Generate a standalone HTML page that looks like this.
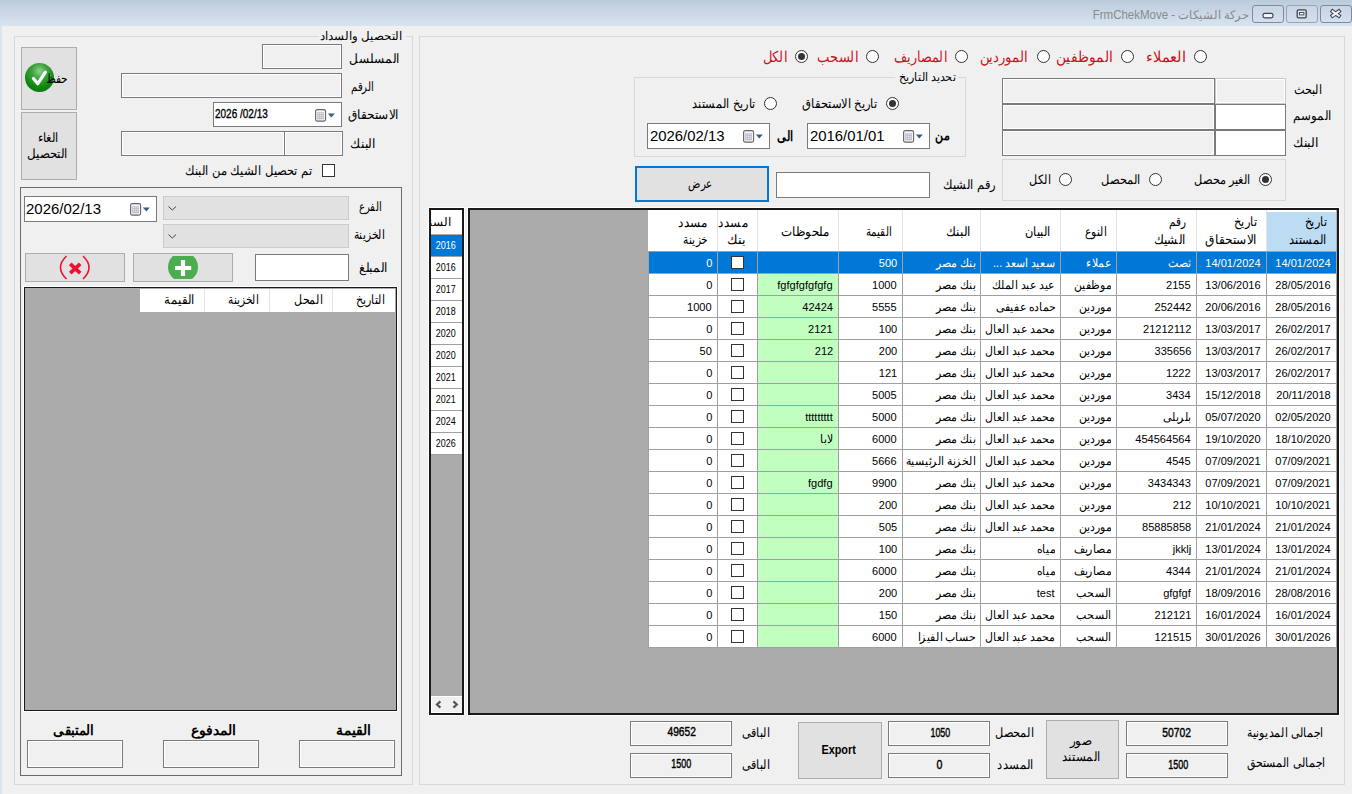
<!DOCTYPE html><html><head><meta charset="utf-8"><style>
*{margin:0;padding:0;box-sizing:border-box}
html,body{width:1352px;height:794px;overflow:hidden;background:#f0f0f0;font-family:"Liberation Sans",sans-serif;color:#000}
div{position:absolute}
.tb{background:#f0f0f0;border:1px solid #7a7a7a;box-shadow:inset 0 0 0 1px #fff}
.tbw{background:#fff;border:1px solid #7a7a7a}
.tbd{background:#f0f0f0;border:1px solid #c8c8c8;box-shadow:inset 0 0 0 1px #fff}
.dp{background:#fff;border:1px solid #7a7a7a;overflow:hidden}
.btn{background:#e1e1e1;border:1px solid #adadad}
.grp{border:1px solid #d8d8d8}
.radio{width:13px;height:13px;border:1px solid #333;border-radius:50%;background:#fff}
.rdot{left:2px;top:2px;width:7px;height:7px;border-radius:50%;background:#333}
.chk{width:13px;height:13px;border:1px solid #333;background:#fff}
.grid{border:2px solid #1a1a1a;background:#ababab;box-shadow:0 0 0 1px #fff}
.cell{border-bottom:1px solid #a0a0a0;background:#fff;overflow:hidden}
</style></head><body>

<div style="left:0;top:0;width:1352px;height:26px;background:linear-gradient(#bccbdc,#d7e4f1)"></div>
<div style="left:849px;width:400px;text-align:right;top:4.5px;height:20px;line-height:20px;white-space:nowrap;font-size:12px;color:#8a8a8a;"><span style="display:inline-block;transform:scaleX(0.9589);transform-origin:right center;direction:rtl;unicode-bidi:plaintext;">FrmChekMove - حركة الشيكات</span></div>
<div style="left:1252px;top:5px;width:32px;height:18px;border:1px solid #7d8aa6;border-radius:3px;background:linear-gradient(#c9d5e3,#d3dfec)"><svg width="32" height="18" style="position:absolute;left:-1px;top:-1px"><rect x="11" y="8.3" width="10" height="4.6" rx="1.8" fill="#f4f4f4" stroke="#3a4256" stroke-width="1.2"/></svg></div>
<div style="left:1286px;top:5px;width:32px;height:18px;border:1px solid #9aa3b3;border-radius:3px;background:linear-gradient(#c9d5e3,#d3dfec)"><svg width="32" height="18" style="position:absolute;left:-1px;top:-1px"><rect x="11.2" y="4.8" width="9" height="8" rx="1.3" fill="#e6e6e6" stroke="#3a4256" stroke-width="1.3"/><rect x="13.5" y="7.5" width="4.4" height="2.4" fill="#fafafa" stroke="#3a4256" stroke-width="0.9"/></svg></div>
<div style="left:1320px;top:5px;width:32px;height:18px;border:1px solid #7d8aa6;border-radius:3px;background:linear-gradient(#c9d5e3,#d3dfec)"><svg width="32" height="18" style="position:absolute;left:-1px;top:-1px"><path d="M12.6 6.4l6.2 4.4M18.8 6.4l-6.2 4.4" stroke="#3a4256" stroke-width="4" stroke-linecap="square"/><path d="M12.6 6.4l6.2 4.4M18.8 6.4l-6.2 4.4" stroke="#f4f4f4" stroke-width="2" stroke-linecap="square"/></svg></div>
<div style="left:0;top:26px;width:2px;height:768px;background:#d9e5f2"></div>
<div class="grp" style="left:14px;top:36px;width:399px;height:749px"></div>
<div style="left:319px;top:30px;width:87px;height:12px;background:#f0f0f0"></div>
<div style="left:2px;width:400px;text-align:right;top:26.0px;height:20px;line-height:20px;white-space:nowrap;font-size:12px;"><span style="display:inline-block;transform:scaleX(0.9839);transform-origin:right center;direction:rtl;unicode-bidi:plaintext;">التحصيل والسداد</span></div>
<div class="btn" style="left:21px;top:47px;width:56px;height:63px;"></div>
<div style="left:25px;top:63px;width:29px;height:29px;border-radius:50%;background:radial-gradient(circle at 50% 28%,#8fd08f 0%,#3ea23e 30%,#108a10 62%,#0a6a0a 100%)"></div>
<svg width="30" height="30" style="position:absolute;left:25px;top:63px"><path d="M8.5 15.5l4.3 5.2l7.6-11.6" stroke="#fff" stroke-width="3.2" fill="none" stroke-linecap="round" stroke-linejoin="round"/></svg>
<div style="left:-332px;width:400px;text-align:right;top:68.5px;height:20px;line-height:20px;white-space:nowrap;font-size:13px;"><span style="display:inline-block;transform:scaleX(0.8148);transform-origin:right center;direction:rtl;unicode-bidi:plaintext;">حفظ</span></div>
<div class="btn" style="left:21px;top:112px;width:56px;height:68px;"></div>
<div style="left:-152.5px;width:400px;text-align:center;top:127.5px;height:20px;line-height:20px;white-space:nowrap;font-size:13px;"><span style="display:inline-block;transform:scaleX(0.8750);transform-origin:center center;direction:rtl;unicode-bidi:plaintext;">الغاء</span></div>
<div style="left:-152.5px;width:400px;text-align:center;top:144.0px;height:20px;line-height:20px;white-space:nowrap;font-size:13px;"><span style="display:inline-block;transform:scaleX(0.9111);transform-origin:center center;direction:rtl;unicode-bidi:plaintext;">التحصيل</span></div>
<div style="left:0px;width:400px;text-align:right;top:48.8px;height:20px;line-height:20px;white-space:nowrap;font-size:13px;"><span style="display:inline-block;transform:scaleX(0.9352);transform-origin:right center;direction:rtl;unicode-bidi:plaintext;">المسلسل</span></div>
<div style="left:-26.30000000000001px;width:400px;text-align:right;top:77.2px;height:20px;line-height:20px;white-space:nowrap;font-size:13px;"><span style="display:inline-block;transform:scaleX(0.7767);transform-origin:right center;direction:rtl;unicode-bidi:plaintext;">الرقم</span></div>
<div style="left:-1.3999999999999773px;width:400px;text-align:right;top:104.7px;height:20px;line-height:20px;white-space:nowrap;font-size:13px;"><span style="display:inline-block;transform:scaleX(0.9327);transform-origin:right center;direction:rtl;unicode-bidi:plaintext;">الاستحقاق</span></div>
<div style="left:-24px;width:400px;text-align:right;top:134.3px;height:20px;line-height:20px;white-space:nowrap;font-size:13px;"><span style="display:inline-block;transform:scaleX(0.9481);transform-origin:right center;direction:rtl;unicode-bidi:plaintext;">البنك</span></div>
<div style="left:-87.80000000000001px;width:400px;text-align:right;top:160.7px;height:20px;line-height:20px;white-space:nowrap;font-size:13px;"><span style="display:inline-block;transform:scaleX(0.8902);transform-origin:right center;direction:rtl;unicode-bidi:plaintext;">تم تحصيل الشيك من البنك</span></div>
<div class="tb" style="left:262px;top:44px;width:80px;height:25px;"></div>
<div class="tb" style="left:121px;top:73px;width:221px;height:25px;"></div>
<div class="dp" style="left:213px;top:102px;width:129px;height:25px;"><svg width="22" height="13" viewBox="0 0 22 13" style="position:absolute;right:4px;top:50%;margin-top:-6px"><rect x="0.6" y="0.6" width="10" height="11.5" rx="1.6" fill="#f2f5fa" stroke="#6e6262" stroke-width="1.1"/><rect x="2.2" y="3.2" width="6.8" height="7" fill="#b9bdc8"/><path d="M3.3 4.3h1M5.3 4.3h1M7.3 4.3h1M3.3 6.3h1M5.3 6.3h1M7.3 6.3h1M3.3 8.3h1M5.3 8.3h1M7.3 8.3h1" stroke="#fff" stroke-width="1"/><path d="M12.8 4.6h7l-3.5 3.8z" fill="#3d5a85"/></svg></div>
<div class="tb" style="left:121px;top:131px;width:164px;height:25px;"></div>
<div class="tb" style="left:284px;top:131px;width:59px;height:25px;"></div>
<div class="chk" style="left:322px;top:164px"></div>
<div style="left:215.4px;width:400px;text-align:left;top:104.0px;height:20px;line-height:20px;white-space:nowrap;font-size:12px;-webkit-text-stroke:0.35px #000;"><span style="display:inline-block;transform:scaleX(0.8327);transform-origin:left center;">2026 /02/13</span></div>
<div style="left:20px;top:187px;width:382px;height:589px;border:1px solid #6a6a6a"></div>
<div class="dp" style="left:24px;top:196px;width:133px;height:26px;"><svg width="22" height="13" viewBox="0 0 22 13" style="position:absolute;right:4px;top:50%;margin-top:-6px"><rect x="0.6" y="0.6" width="10" height="11.5" rx="1.6" fill="#f2f5fa" stroke="#6e6262" stroke-width="1.1"/><rect x="2.2" y="3.2" width="6.8" height="7" fill="#b9bdc8"/><path d="M3.3 4.3h1M5.3 4.3h1M7.3 4.3h1M3.3 6.3h1M5.3 6.3h1M7.3 6.3h1M3.3 8.3h1M5.3 8.3h1M7.3 8.3h1" stroke="#fff" stroke-width="1"/><path d="M12.8 4.6h7l-3.5 3.8z" fill="#3d5a85"/></svg></div>
<div class="" style="left:163px;top:196px;width:186px;height:24px;background:#e1e1e1;border:1px solid #cccccc"><svg width="12" height="8" style="position:absolute;left:3px;top:8px"><path d="M1.5 1.5l3.8 3.5l3.8-3.5" stroke="#444" stroke-width="1" fill="none"/></svg></div>
<div class="" style="left:163px;top:224px;width:186px;height:24px;background:#e1e1e1;border:1px solid #cccccc"><svg width="12" height="8" style="position:absolute;left:3px;top:8px"><path d="M1.5 1.5l3.8 3.5l3.8-3.5" stroke="#444" stroke-width="1" fill="none"/></svg></div>
<div class="btn" style="left:25px;top:253px;width:100px;height:29px;"><svg width="100" height="29" style="position:absolute;left:-1px;top:-1px"><path d="M41.5 3 Q29.5 14.5 41.5 26" stroke="#ee1133" stroke-width="1.6" fill="none"/><path d="M58 3 Q70 14.5 58 26" stroke="#ee1133" stroke-width="1.6" fill="none"/><path d="M45.2 10.8l10 9.4M55.2 10.8l-10 9.4" stroke="#ee1133" stroke-width="3.8"/></svg></div>
<div class="btn" style="left:133px;top:253px;width:100px;height:29px;"><div style="left:0;top:2px;width:98px;height:23px;overflow:hidden"><div style="left:34px;top:-4px;width:30px;height:30px;border-radius:50%;background:#4aae50"></div><svg width="98" height="23" style="position:absolute;left:0;top:0"><path d="M49 4v16M41 12h16.2" stroke="#fff" stroke-width="4.2"/></svg></div></div>
<div class="tbw" style="left:255px;top:254px;width:94px;height:27px;"></div>
<div style="left:26px;width:400px;text-align:left;top:199.0px;height:20px;line-height:20px;white-space:nowrap;font-size:15px;"><span style="display:inline-block;transform:scaleX(0.9990);transform-origin:left center;">2026/02/13</span></div>
<div style="left:-18.5px;width:400px;text-align:right;top:197.3px;height:20px;line-height:20px;white-space:nowrap;font-size:13px;"><span style="display:inline-block;transform:scaleX(0.7767);transform-origin:right center;direction:rtl;unicode-bidi:plaintext;">الفرع</span></div>
<div style="left:-15.399999999999977px;width:400px;text-align:right;top:225.3px;height:20px;line-height:20px;white-space:nowrap;font-size:13px;"><span style="display:inline-block;transform:scaleX(0.8263);transform-origin:right center;direction:rtl;unicode-bidi:plaintext;">الخزينة</span></div>
<div style="left:-12.300000000000011px;width:400px;text-align:right;top:257.6px;height:20px;line-height:20px;white-space:nowrap;font-size:13px;"><span style="display:inline-block;transform:scaleX(0.9323);transform-origin:right center;direction:rtl;unicode-bidi:plaintext;">المبلغ</span></div>
<div class="grid" style="left:24px;top:287px;width:373px;height:424px;border-width:1px"></div>
<div style="left:140px;top:289px;width:255px;height:23px;background:#fff"></div>
<div style="left:204px;top:289px;width:1px;height:23px;background:#e3e3e3"></div>
<div style="left:269px;top:289px;width:1px;height:23px;background:#e3e3e3"></div>
<div style="left:332px;top:289px;width:1px;height:23px;background:#e3e3e3"></div>
<div style="left:-14.800000000000011px;width:400px;text-align:right;top:289.6px;height:20px;line-height:20px;white-space:nowrap;font-size:13px;"><span style="display:inline-block;transform:scaleX(0.8500);transform-origin:right center;direction:rtl;unicode-bidi:plaintext;">التاريخ</span></div>
<div style="left:-77.5px;width:400px;text-align:right;top:289.6px;height:20px;line-height:20px;white-space:nowrap;font-size:13px;"><span style="display:inline-block;transform:scaleX(0.8500);transform-origin:right center;direction:rtl;unicode-bidi:plaintext;">المحل</span></div>
<div style="left:-140.60000000000002px;width:400px;text-align:right;top:289.6px;height:20px;line-height:20px;white-space:nowrap;font-size:13px;"><span style="display:inline-block;transform:scaleX(0.8184);transform-origin:right center;direction:rtl;unicode-bidi:plaintext;">الخزينة</span></div>
<div style="left:-205.5px;width:400px;text-align:right;top:289.6px;height:20px;line-height:20px;white-space:nowrap;font-size:13px;"><span style="display:inline-block;transform:scaleX(0.8971);transform-origin:right center;direction:rtl;unicode-bidi:plaintext;">القيمة</span></div>
<div style="left:-28.80000000000001px;width:400px;text-align:right;top:719.5px;height:20px;line-height:20px;white-space:nowrap;font-size:14px;font-weight:bold;"><span style="display:inline-block;transform:scaleX(0.9943);transform-origin:right center;direction:rtl;unicode-bidi:plaintext;">القيمة</span></div>
<div style="left:-163.9px;width:400px;text-align:right;top:719.5px;height:20px;line-height:20px;white-space:nowrap;font-size:14px;font-weight:bold;"><span style="display:inline-block;transform:scaleX(1.0022);transform-origin:right center;direction:rtl;unicode-bidi:plaintext;">المدفوع</span></div>
<div style="left:-305.9px;width:400px;text-align:right;top:719.5px;height:20px;line-height:20px;white-space:nowrap;font-size:14px;font-weight:bold;"><span style="display:inline-block;transform:scaleX(0.9465);transform-origin:right center;direction:rtl;unicode-bidi:plaintext;">المتبقى</span></div>
<div class="tb" style="left:27px;top:740px;width:96px;height:28px;"></div>
<div class="tb" style="left:163px;top:740px;width:96px;height:28px;"></div>
<div class="tb" style="left:299px;top:740px;width:96px;height:28px;"></div>
<div class="grp" style="left:419px;top:36px;width:926px;height:749px"></div>
<div class="radio" style="left:1193.5px;top:50.0px"></div>
<div style="left:786px;width:400px;text-align:right;top:47.0px;height:20px;line-height:20px;white-space:nowrap;font-size:15px;color:#c8141e;"><span style="display:inline-block;transform:scaleX(0.9756);transform-origin:right center;direction:rtl;unicode-bidi:plaintext;">العملاء</span></div>
<div class="radio" style="left:1120.5px;top:50.0px"></div>
<div style="left:713px;width:400px;text-align:right;top:47.0px;height:20px;line-height:20px;white-space:nowrap;font-size:15px;color:#c8141e;"><span style="display:inline-block;transform:scaleX(0.9194);transform-origin:right center;direction:rtl;unicode-bidi:plaintext;">الموظفين</span></div>
<div class="radio" style="left:1037.0px;top:50.0px"></div>
<div style="left:628.4000000000001px;width:400px;text-align:right;top:47.0px;height:20px;line-height:20px;white-space:nowrap;font-size:15px;color:#c8141e;"><span style="display:inline-block;transform:scaleX(0.8800);transform-origin:right center;direction:rtl;unicode-bidi:plaintext;">الموردين</span></div>
<div class="radio" style="left:954.5px;top:50.0px"></div>
<div style="left:546.8px;width:400px;text-align:right;top:47.0px;height:20px;line-height:20px;white-space:nowrap;font-size:15px;color:#c8141e;"><span style="display:inline-block;transform:scaleX(0.8460);transform-origin:right center;direction:rtl;unicode-bidi:plaintext;">المصاريف</span></div>
<div class="radio" style="left:866.0px;top:50.0px"></div>
<div style="left:457.6px;width:400px;text-align:right;top:47.0px;height:20px;line-height:20px;white-space:nowrap;font-size:15px;color:#c8141e;"><span style="display:inline-block;transform:scaleX(0.8745);transform-origin:right center;direction:rtl;unicode-bidi:plaintext;">السحب</span></div>
<div class="radio" style="left:795.0px;top:50.0px"><div class="rdot"></div></div>
<div style="left:386.6px;width:400px;text-align:right;top:47.0px;height:20px;line-height:20px;white-space:nowrap;font-size:15px;color:#c8141e;"><span style="display:inline-block;transform:scaleX(0.8714);transform-origin:right center;direction:rtl;unicode-bidi:plaintext;">الكل</span></div>
<div style="left:921.5999999999999px;width:400px;text-align:right;top:79.5px;height:20px;line-height:20px;white-space:nowrap;font-size:13px;"><span style="display:inline-block;transform:scaleX(0.8606);transform-origin:right center;direction:rtl;unicode-bidi:plaintext;">البحث</span></div>
<div style="left:932px;width:400px;text-align:right;top:106.0px;height:20px;line-height:20px;white-space:nowrap;font-size:13px;"><span style="display:inline-block;transform:scaleX(0.9070);transform-origin:right center;direction:rtl;unicode-bidi:plaintext;">الموسم</span></div>
<div style="left:919px;width:400px;text-align:right;top:132.8px;height:20px;line-height:20px;white-space:nowrap;font-size:13px;"><span style="display:inline-block;transform:scaleX(0.9630);transform-origin:right center;direction:rtl;unicode-bidi:plaintext;">البنك</span></div>
<div class="tb" style="left:1002px;top:78px;width:213px;height:26px;"></div>
<div class="tb" style="left:1002px;top:104px;width:213px;height:26px;"></div>
<div class="tb" style="left:1002px;top:130px;width:213px;height:26px;"></div>
<div class="tbd" style="left:1215px;top:78px;width:71px;height:26px;"></div>
<div class="tbw" style="left:1215px;top:104px;width:71px;height:26px;"></div>
<div class="tbw" style="left:1215px;top:130px;width:71px;height:26px;"></div>
<div class="grp" style="left:1002px;top:159px;width:284px;height:42px"></div>
<div class="radio" style="left:1258.5px;top:173.0px"><div class="rdot"></div></div>
<div class="radio" style="left:1148.5px;top:173.0px"></div>
<div class="radio" style="left:1058.5px;top:173.0px"></div>
<div style="left:850.2px;width:400px;text-align:right;top:169.5px;height:20px;line-height:20px;white-space:nowrap;font-size:13px;"><span style="display:inline-block;transform:scaleX(0.8696);transform-origin:right center;direction:rtl;unicode-bidi:plaintext;">الغير محصل</span></div>
<div style="left:740.5px;width:400px;text-align:right;top:169.5px;height:20px;line-height:20px;white-space:nowrap;font-size:13px;"><span style="display:inline-block;transform:scaleX(0.8778);transform-origin:right center;direction:rtl;unicode-bidi:plaintext;">المحصل</span></div>
<div style="left:651px;width:400px;text-align:right;top:169.5px;height:20px;line-height:20px;white-space:nowrap;font-size:13px;"><span style="display:inline-block;transform:scaleX(0.8640);transform-origin:right center;direction:rtl;unicode-bidi:plaintext;">الكل</span></div>
<div class="grp" style="left:634px;top:77px;width:332px;height:80px"></div>
<div style="left:895px;top:70px;width:63px;height:12px;background:#f0f0f0"></div>
<div class="radio" style="left:886.0px;top:97.0px"><div class="rdot"></div></div>
<div class="radio" style="left:764.0px;top:97.0px"></div>
<div class="dp" style="left:807px;top:123px;width:123px;height:26px;"><svg width="22" height="13" viewBox="0 0 22 13" style="position:absolute;right:4px;top:50%;margin-top:-6px"><rect x="0.6" y="0.6" width="10" height="11.5" rx="1.6" fill="#f2f5fa" stroke="#6e6262" stroke-width="1.1"/><rect x="2.2" y="3.2" width="6.8" height="7" fill="#b9bdc8"/><path d="M3.3 4.3h1M5.3 4.3h1M7.3 4.3h1M3.3 6.3h1M5.3 6.3h1M7.3 6.3h1M3.3 8.3h1M5.3 8.3h1M7.3 8.3h1" stroke="#fff" stroke-width="1"/><path d="M12.8 4.6h7l-3.5 3.8z" fill="#3d5a85"/></svg></div>
<div class="dp" style="left:647px;top:123px;width:123px;height:26px;"><svg width="22" height="13" viewBox="0 0 22 13" style="position:absolute;right:4px;top:50%;margin-top:-6px"><rect x="0.6" y="0.6" width="10" height="11.5" rx="1.6" fill="#f2f5fa" stroke="#6e6262" stroke-width="1.1"/><rect x="2.2" y="3.2" width="6.8" height="7" fill="#b9bdc8"/><path d="M3.3 4.3h1M5.3 4.3h1M7.3 4.3h1M3.3 6.3h1M5.3 6.3h1M7.3 6.3h1M3.3 8.3h1M5.3 8.3h1M7.3 8.3h1" stroke="#fff" stroke-width="1"/><path d="M12.8 4.6h7l-3.5 3.8z" fill="#3d5a85"/></svg></div>
<div class="" style="left:635px;top:166px;width:134px;height:36px;background:#e1e1e1;border:2px solid #0078d7"></div>
<div class="tbw" style="left:776px;top:172px;width:154px;height:26px;"></div>
<div style="left:555px;width:400px;text-align:right;top:67.0px;height:20px;line-height:20px;white-space:nowrap;font-size:12px;"><span style="display:inline-block;transform:scaleX(0.9259);transform-origin:right center;direction:rtl;unicode-bidi:plaintext;">تحديد التاريخ</span></div>
<div style="left:478px;width:400px;text-align:right;top:93.6px;height:20px;line-height:20px;white-space:nowrap;font-size:13px;"><span style="display:inline-block;transform:scaleX(0.8898);transform-origin:right center;direction:rtl;unicode-bidi:plaintext;">تاريخ الاستحقاق</span></div>
<div style="left:355.70000000000005px;width:400px;text-align:right;top:93.6px;height:20px;line-height:20px;white-space:nowrap;font-size:13px;"><span style="display:inline-block;transform:scaleX(0.8744);transform-origin:right center;direction:rtl;unicode-bidi:plaintext;">تاريخ المستند</span></div>
<div style="left:809.7px;width:400px;text-align:left;top:126.0px;height:20px;line-height:20px;white-space:nowrap;font-size:15px;"><span style="display:inline-block;transform:scaleX(0.9923);transform-origin:left center;">2016/01/01</span></div>
<div style="left:649.5px;width:400px;text-align:left;top:126.0px;height:20px;line-height:20px;white-space:nowrap;font-size:15px;"><span style="display:inline-block;transform:scaleX(0.9923);transform-origin:left center;">2026/02/13</span></div>
<div style="left:550.2px;width:400px;text-align:right;top:124.5px;height:20px;line-height:20px;white-space:nowrap;font-size:14px;font-weight:bold;"><span style="display:inline-block;transform:scaleX(0.7842);transform-origin:right center;direction:rtl;unicode-bidi:plaintext;">من</span></div>
<div style="left:393.4px;width:400px;text-align:right;top:126.0px;height:20px;line-height:20px;white-space:nowrap;font-size:14px;font-weight:bold;"><span style="display:inline-block;transform:scaleX(0.8000);transform-origin:right center;direction:rtl;unicode-bidi:plaintext;">الى</span></div>
<div style="left:500.5px;width:400px;text-align:center;top:173.7px;height:20px;line-height:20px;white-space:nowrap;font-size:13px;"><span style="display:inline-block;transform:scaleX(0.7871);transform-origin:center center;direction:rtl;unicode-bidi:plaintext;">عرض</span></div>
<div style="left:595.2px;width:400px;text-align:right;top:175.0px;height:20px;line-height:20px;white-space:nowrap;font-size:13px;"><span style="display:inline-block;transform:scaleX(0.8855);transform-origin:right center;direction:rtl;unicode-bidi:plaintext;">رقم الشيك</span></div>
<div class="grid" style="left:429px;top:208px;width:35px;height:507px"></div>
<div style="left:431px;top:210px;width:31px;height:24px;background:#fff;overflow:hidden"><div style="left:-36px;top:2px;width:56px;height:20px;line-height:20px;font-size:12px;text-align:right;direction:rtl">السنة</div></div>
<div style="left:431px;top:235px;width:31px;height:22px;background:#0078d7;color:#fff;border-bottom:1px solid #a0a0a0;font-size:11.5px;line-height:21px;text-align:center;padding-right:1px"><span style="display:inline-block;transform:scaleX(0.78)">2016</span></div>
<div style="left:431px;top:257px;width:31px;height:22px;background:#fff;color:#000;border-bottom:1px solid #a0a0a0;font-size:11.5px;line-height:21px;text-align:center;padding-right:1px"><span style="display:inline-block;transform:scaleX(0.78)">2016</span></div>
<div style="left:431px;top:279px;width:31px;height:22px;background:#fff;color:#000;border-bottom:1px solid #a0a0a0;font-size:11.5px;line-height:21px;text-align:center;padding-right:1px"><span style="display:inline-block;transform:scaleX(0.78)">2017</span></div>
<div style="left:431px;top:301px;width:31px;height:22px;background:#fff;color:#000;border-bottom:1px solid #a0a0a0;font-size:11.5px;line-height:21px;text-align:center;padding-right:1px"><span style="display:inline-block;transform:scaleX(0.78)">2018</span></div>
<div style="left:431px;top:323px;width:31px;height:22px;background:#fff;color:#000;border-bottom:1px solid #a0a0a0;font-size:11.5px;line-height:21px;text-align:center;padding-right:1px"><span style="display:inline-block;transform:scaleX(0.78)">2020</span></div>
<div style="left:431px;top:345px;width:31px;height:22px;background:#fff;color:#000;border-bottom:1px solid #a0a0a0;font-size:11.5px;line-height:21px;text-align:center;padding-right:1px"><span style="display:inline-block;transform:scaleX(0.78)">2020</span></div>
<div style="left:431px;top:367px;width:31px;height:22px;background:#fff;color:#000;border-bottom:1px solid #a0a0a0;font-size:11.5px;line-height:21px;text-align:center;padding-right:1px"><span style="display:inline-block;transform:scaleX(0.78)">2021</span></div>
<div style="left:431px;top:389px;width:31px;height:22px;background:#fff;color:#000;border-bottom:1px solid #a0a0a0;font-size:11.5px;line-height:21px;text-align:center;padding-right:1px"><span style="display:inline-block;transform:scaleX(0.78)">2021</span></div>
<div style="left:431px;top:411px;width:31px;height:22px;background:#fff;color:#000;border-bottom:1px solid #a0a0a0;font-size:11.5px;line-height:21px;text-align:center;padding-right:1px"><span style="display:inline-block;transform:scaleX(0.78)">2024</span></div>
<div style="left:431px;top:433px;width:31px;height:22px;background:#fff;color:#000;border-bottom:1px solid #a0a0a0;font-size:11.5px;line-height:21px;text-align:center;padding-right:1px"><span style="display:inline-block;transform:scaleX(0.78)">2026</span></div>
<div style="left:431px;top:696px;width:31px;height:17px;background:#f0f0f0;border-top:1px solid #fff;border-bottom:1px solid #fff;border-left:1px solid #fff"><svg width="31" height="16" style="position:absolute;left:-1px;top:-1px"><path d="M9.4 5.4l-3.4 3.1l3.4 3.1M22.4 5.4l3.4 3.1l-3.4 3.1" stroke="#555" stroke-width="2.2" fill="none"/></svg></div>
<div class="grid" style="left:468px;top:208px;width:871px;height:507px"></div>
<div style="left:648px;top:210px;width:689px;height:42px;background:#fff;border-bottom:1px solid #a0a0a0"></div>
<div style="left:1266px;top:212px;width:70px;height:39px;background:#bcdcf4"></div><div style="left:1336px;top:210px;width:1px;height:41px;background:#b0b0b0"></div>
<div style="left:1266px;top:210px;width:1px;height:41px;background:#e3e3e3"></div>
<div style="left:1196px;top:210px;width:1px;height:41px;background:#e3e3e3"></div>
<div style="left:1116px;top:210px;width:1px;height:41px;background:#e3e3e3"></div>
<div style="left:1060px;top:210px;width:1px;height:41px;background:#e3e3e3"></div>
<div style="left:980px;top:210px;width:1px;height:41px;background:#e3e3e3"></div>
<div style="left:902px;top:210px;width:1px;height:41px;background:#e3e3e3"></div>
<div style="left:838px;top:210px;width:1px;height:41px;background:#e3e3e3"></div>
<div style="left:757px;top:210px;width:1px;height:41px;background:#e3e3e3"></div>
<div style="left:717px;top:210px;width:1px;height:41px;background:#e3e3e3"></div>
<div style="left:926.5px;width:400px;text-align:right;top:212.4px;height:20px;line-height:20px;white-space:nowrap;font-size:13px;"><span style="display:inline-block;transform:scaleX(0.8615);transform-origin:right center;direction:rtl;unicode-bidi:plaintext;">تاريخ</span></div>
<div style="left:926.5px;width:400px;text-align:right;top:229.5px;height:20px;line-height:20px;white-space:nowrap;font-size:13px;"><span style="display:inline-block;transform:scaleX(0.8884);transform-origin:right center;direction:rtl;unicode-bidi:plaintext;">المستند</span></div>
<div style="left:856.9000000000001px;width:400px;text-align:right;top:212.4px;height:20px;line-height:20px;white-space:nowrap;font-size:13px;"><span style="display:inline-block;transform:scaleX(0.8731);transform-origin:right center;direction:rtl;unicode-bidi:plaintext;">تاريخ</span></div>
<div style="left:856.9000000000001px;width:400px;text-align:right;top:229.5px;height:20px;line-height:20px;white-space:nowrap;font-size:13px;"><span style="display:inline-block;transform:scaleX(0.9382);transform-origin:right center;direction:rtl;unicode-bidi:plaintext;">الاستحقاق</span></div>
<div style="left:786.0999999999999px;width:400px;text-align:right;top:212.4px;height:20px;line-height:20px;white-space:nowrap;font-size:13px;"><span style="display:inline-block;transform:scaleX(0.8000);transform-origin:right center;direction:rtl;unicode-bidi:plaintext;">رقم</span></div>
<div style="left:786.0999999999999px;width:400px;text-align:right;top:229.5px;height:20px;line-height:20px;white-space:nowrap;font-size:13px;"><span style="display:inline-block;transform:scaleX(0.9257);transform-origin:right center;direction:rtl;unicode-bidi:plaintext;">الشيك</span></div>
<div style="left:706.5px;width:400px;text-align:right;top:221.5px;height:20px;line-height:20px;white-space:nowrap;font-size:13px;"><span style="display:inline-block;transform:scaleX(0.8222);transform-origin:right center;direction:rtl;unicode-bidi:plaintext;">النوع</span></div>
<div style="left:650.5px;width:400px;text-align:right;top:221.5px;height:20px;line-height:20px;white-space:nowrap;font-size:13px;"><span style="display:inline-block;transform:scaleX(0.8767);transform-origin:right center;direction:rtl;unicode-bidi:plaintext;">البيان</span></div>
<div style="left:570.6px;width:400px;text-align:right;top:221.5px;height:20px;line-height:20px;white-space:nowrap;font-size:13px;"><span style="display:inline-block;transform:scaleX(0.9259);transform-origin:right center;direction:rtl;unicode-bidi:plaintext;">البنك</span></div>
<div style="left:492px;width:400px;text-align:right;top:221.5px;height:20px;line-height:20px;white-space:nowrap;font-size:13px;"><span style="display:inline-block;transform:scaleX(0.7794);transform-origin:right center;direction:rtl;unicode-bidi:plaintext;">القيمة</span></div>
<div style="left:429.1px;width:400px;text-align:right;top:221.5px;height:20px;line-height:20px;white-space:nowrap;font-size:13px;"><span style="display:inline-block;transform:scaleX(0.9154);transform-origin:right center;direction:rtl;unicode-bidi:plaintext;">ملحوظات</span></div>
<div style="left:348px;width:400px;text-align:right;top:212.8px;height:20px;line-height:20px;white-space:nowrap;font-size:13px;"><span style="display:inline-block;transform:scaleX(0.9219);transform-origin:right center;direction:rtl;unicode-bidi:plaintext;">مسدد</span></div>
<div style="left:346px;width:400px;text-align:right;top:229.6px;height:20px;line-height:20px;white-space:nowrap;font-size:13px;"><span style="display:inline-block;transform:scaleX(0.9842);transform-origin:right center;direction:rtl;unicode-bidi:plaintext;">بنك</span></div>
<div style="left:308px;width:400px;text-align:right;top:212.8px;height:20px;line-height:20px;white-space:nowrap;font-size:13px;"><span style="display:inline-block;transform:scaleX(0.9312);transform-origin:right center;direction:rtl;unicode-bidi:plaintext;">مسدد</span></div>
<div style="left:308px;width:400px;text-align:right;top:229.6px;height:20px;line-height:20px;white-space:nowrap;font-size:13px;"><span style="display:inline-block;transform:scaleX(0.8167);transform-origin:right center;direction:rtl;unicode-bidi:plaintext;">خزينة</span></div>
<div style="left:648px;top:252px;width:689px;height:22px"><div class="cell" style="left:618px;top:0;width:71px;height:22px;background:#0078d7;border-left:1px solid #a0a0a0;border-right:1px solid #a0a0a0;"></div><div class="cell" style="left:548px;top:0;width:70px;height:22px;background:#0078d7;border-left:1px solid #a0a0a0;"></div><div class="cell" style="left:468px;top:0;width:80px;height:22px;background:#0078d7;border-left:1px solid #a0a0a0;"></div><div class="cell" style="left:412px;top:0;width:56px;height:22px;background:#0078d7;border-left:1px solid #a0a0a0;"></div><div class="cell" style="left:332px;top:0;width:80px;height:22px;background:#0078d7;border-left:1px solid #a0a0a0;"></div><div class="cell" style="left:254px;top:0;width:78px;height:22px;background:#0078d7;border-left:1px solid #a0a0a0;"></div><div class="cell" style="left:190px;top:0;width:64px;height:22px;background:#0078d7;border-left:1px solid #a0a0a0;"></div><div class="cell" style="left:109px;top:0;width:81px;height:22px;background:#0078d7;border-left:1px solid #a0a0a0;"></div><div class="cell" style="left:69px;top:0;width:40px;height:22px;background:#0078d7;border-left:1px solid #a0a0a0;"><div class="chk" style="left:13px;top:4px"></div></div><div class="cell" style="left:0px;top:0;width:69px;height:22px;background:#0078d7;border-left:1px solid #a0a0a0;"></div></div>
<div style="left:931px;width:400px;text-align:right;top:253.0px;height:20px;line-height:20px;white-space:nowrap;font-size:11.5px;color:#fff;"><span style="display:inline-block;transform:scaleX(0.9600);transform-origin:right center;">14/01/2024</span></div>
<div style="left:861px;width:400px;text-align:right;top:253.0px;height:20px;line-height:20px;white-space:nowrap;font-size:11.5px;color:#fff;"><span style="display:inline-block;transform:scaleX(0.9600);transform-origin:right center;">14/01/2024</span></div>
<div style="left:791px;width:400px;text-align:right;top:252.5px;height:20px;line-height:20px;white-space:nowrap;font-size:12px;color:#fff;"><span style="display:inline-block;transform:scaleX(0.9100);transform-origin:right center;direction:rtl;unicode-bidi:plaintext;">ثصث</span></div>
<div style="left:711px;width:400px;text-align:right;top:252.5px;height:20px;line-height:20px;white-space:nowrap;font-size:12px;color:#fff;"><span style="display:inline-block;transform:scaleX(0.9100);transform-origin:right center;direction:rtl;unicode-bidi:plaintext;">عملاء</span></div>
<div style="left:655px;width:400px;text-align:right;top:252.5px;height:20px;line-height:20px;white-space:nowrap;font-size:12px;color:#fff;"><span style="display:inline-block;transform:scaleX(0.9100);transform-origin:right center;direction:rtl;unicode-bidi:plaintext;">سعيد اسعد ...</span></div>
<div style="left:575px;width:400px;text-align:right;top:252.5px;height:20px;line-height:20px;white-space:nowrap;font-size:12px;color:#fff;"><span style="display:inline-block;transform:scaleX(0.9100);transform-origin:right center;direction:rtl;unicode-bidi:plaintext;">بنك مصر</span></div>
<div style="left:497px;width:400px;text-align:right;top:253.0px;height:20px;line-height:20px;white-space:nowrap;font-size:11.5px;color:#fff;"><span style="display:inline-block;transform:scaleX(0.9600);transform-origin:right center;">500</span></div>
<div style="left:312px;width:400px;text-align:right;top:253.0px;height:20px;line-height:20px;white-space:nowrap;font-size:11.5px;color:#fff;"><span style="display:inline-block;transform:scaleX(0.9600);transform-origin:right center;">0</span></div>
<div style="left:648px;top:274px;width:689px;height:22px"><div class="cell" style="left:618px;top:0;width:71px;height:22px;background:#fff;border-left:1px solid #a0a0a0;border-right:1px solid #a0a0a0;"></div><div class="cell" style="left:548px;top:0;width:70px;height:22px;background:#fff;border-left:1px solid #a0a0a0;"></div><div class="cell" style="left:468px;top:0;width:80px;height:22px;background:#fff;border-left:1px solid #a0a0a0;"></div><div class="cell" style="left:412px;top:0;width:56px;height:22px;background:#fff;border-left:1px solid #a0a0a0;"></div><div class="cell" style="left:332px;top:0;width:80px;height:22px;background:#fff;border-left:1px solid #a0a0a0;"></div><div class="cell" style="left:254px;top:0;width:78px;height:22px;background:#fff;border-left:1px solid #a0a0a0;"></div><div class="cell" style="left:190px;top:0;width:64px;height:22px;background:#fff;border-left:1px solid #a0a0a0;"></div><div class="cell" style="left:109px;top:0;width:81px;height:22px;background:#c0ffc0;border-left:1px solid #a0a0a0;"></div><div class="cell" style="left:69px;top:0;width:40px;height:22px;background:#fff;border-left:1px solid #a0a0a0;"><div class="chk" style="left:13px;top:4px"></div></div><div class="cell" style="left:0px;top:0;width:69px;height:22px;background:#fff;border-left:1px solid #a0a0a0;"></div></div>
<div style="left:931px;width:400px;text-align:right;top:275.0px;height:20px;line-height:20px;white-space:nowrap;font-size:11.5px;"><span style="display:inline-block;transform:scaleX(0.9600);transform-origin:right center;">28/05/2016</span></div>
<div style="left:861px;width:400px;text-align:right;top:275.0px;height:20px;line-height:20px;white-space:nowrap;font-size:11.5px;"><span style="display:inline-block;transform:scaleX(0.9600);transform-origin:right center;">13/06/2016</span></div>
<div style="left:791px;width:400px;text-align:right;top:275.0px;height:20px;line-height:20px;white-space:nowrap;font-size:11.5px;"><span style="display:inline-block;transform:scaleX(0.9600);transform-origin:right center;">2155</span></div>
<div style="left:711px;width:400px;text-align:right;top:274.5px;height:20px;line-height:20px;white-space:nowrap;font-size:12px;"><span style="display:inline-block;transform:scaleX(0.9100);transform-origin:right center;direction:rtl;unicode-bidi:plaintext;">موظفين</span></div>
<div style="left:655px;width:400px;text-align:right;top:274.5px;height:20px;line-height:20px;white-space:nowrap;font-size:12px;"><span style="display:inline-block;transform:scaleX(0.9100);transform-origin:right center;direction:rtl;unicode-bidi:plaintext;">عيد عبد الملك</span></div>
<div style="left:575px;width:400px;text-align:right;top:274.5px;height:20px;line-height:20px;white-space:nowrap;font-size:12px;"><span style="display:inline-block;transform:scaleX(0.9100);transform-origin:right center;direction:rtl;unicode-bidi:plaintext;">بنك مصر</span></div>
<div style="left:497px;width:400px;text-align:right;top:275.0px;height:20px;line-height:20px;white-space:nowrap;font-size:11.5px;"><span style="display:inline-block;transform:scaleX(0.9600);transform-origin:right center;">1000</span></div>
<div style="left:433px;width:400px;text-align:right;top:275.0px;height:20px;line-height:20px;white-space:nowrap;font-size:11.5px;"><span style="display:inline-block;transform:scaleX(0.9600);transform-origin:right center;">fgfgfgfgfgfg</span></div>
<div style="left:312px;width:400px;text-align:right;top:275.0px;height:20px;line-height:20px;white-space:nowrap;font-size:11.5px;"><span style="display:inline-block;transform:scaleX(0.9600);transform-origin:right center;">0</span></div>
<div style="left:648px;top:296px;width:689px;height:22px"><div class="cell" style="left:618px;top:0;width:71px;height:22px;background:#fff;border-left:1px solid #a0a0a0;border-right:1px solid #a0a0a0;"></div><div class="cell" style="left:548px;top:0;width:70px;height:22px;background:#fff;border-left:1px solid #a0a0a0;"></div><div class="cell" style="left:468px;top:0;width:80px;height:22px;background:#fff;border-left:1px solid #a0a0a0;"></div><div class="cell" style="left:412px;top:0;width:56px;height:22px;background:#fff;border-left:1px solid #a0a0a0;"></div><div class="cell" style="left:332px;top:0;width:80px;height:22px;background:#fff;border-left:1px solid #a0a0a0;"></div><div class="cell" style="left:254px;top:0;width:78px;height:22px;background:#fff;border-left:1px solid #a0a0a0;"></div><div class="cell" style="left:190px;top:0;width:64px;height:22px;background:#fff;border-left:1px solid #a0a0a0;"></div><div class="cell" style="left:109px;top:0;width:81px;height:22px;background:#c0ffc0;border-left:1px solid #a0a0a0;"></div><div class="cell" style="left:69px;top:0;width:40px;height:22px;background:#fff;border-left:1px solid #a0a0a0;"><div class="chk" style="left:13px;top:4px"></div></div><div class="cell" style="left:0px;top:0;width:69px;height:22px;background:#fff;border-left:1px solid #a0a0a0;"></div></div>
<div style="left:931px;width:400px;text-align:right;top:297.0px;height:20px;line-height:20px;white-space:nowrap;font-size:11.5px;"><span style="display:inline-block;transform:scaleX(0.9600);transform-origin:right center;">28/05/2016</span></div>
<div style="left:861px;width:400px;text-align:right;top:297.0px;height:20px;line-height:20px;white-space:nowrap;font-size:11.5px;"><span style="display:inline-block;transform:scaleX(0.9600);transform-origin:right center;">20/06/2016</span></div>
<div style="left:791px;width:400px;text-align:right;top:297.0px;height:20px;line-height:20px;white-space:nowrap;font-size:11.5px;"><span style="display:inline-block;transform:scaleX(0.9600);transform-origin:right center;">252442</span></div>
<div style="left:711px;width:400px;text-align:right;top:296.5px;height:20px;line-height:20px;white-space:nowrap;font-size:12px;"><span style="display:inline-block;transform:scaleX(0.9100);transform-origin:right center;direction:rtl;unicode-bidi:plaintext;">موردين</span></div>
<div style="left:655px;width:400px;text-align:right;top:296.5px;height:20px;line-height:20px;white-space:nowrap;font-size:12px;"><span style="display:inline-block;transform:scaleX(0.9100);transform-origin:right center;direction:rtl;unicode-bidi:plaintext;">حماده عفيفى</span></div>
<div style="left:575px;width:400px;text-align:right;top:296.5px;height:20px;line-height:20px;white-space:nowrap;font-size:12px;"><span style="display:inline-block;transform:scaleX(0.9100);transform-origin:right center;direction:rtl;unicode-bidi:plaintext;">بنك مصر</span></div>
<div style="left:497px;width:400px;text-align:right;top:297.0px;height:20px;line-height:20px;white-space:nowrap;font-size:11.5px;"><span style="display:inline-block;transform:scaleX(0.9600);transform-origin:right center;">5555</span></div>
<div style="left:433px;width:400px;text-align:right;top:297.0px;height:20px;line-height:20px;white-space:nowrap;font-size:11.5px;"><span style="display:inline-block;transform:scaleX(0.9600);transform-origin:right center;">42424</span></div>
<div style="left:312px;width:400px;text-align:right;top:297.0px;height:20px;line-height:20px;white-space:nowrap;font-size:11.5px;"><span style="display:inline-block;transform:scaleX(0.9600);transform-origin:right center;">1000</span></div>
<div style="left:648px;top:318px;width:689px;height:22px"><div class="cell" style="left:618px;top:0;width:71px;height:22px;background:#fff;border-left:1px solid #a0a0a0;border-right:1px solid #a0a0a0;"></div><div class="cell" style="left:548px;top:0;width:70px;height:22px;background:#fff;border-left:1px solid #a0a0a0;"></div><div class="cell" style="left:468px;top:0;width:80px;height:22px;background:#fff;border-left:1px solid #a0a0a0;"></div><div class="cell" style="left:412px;top:0;width:56px;height:22px;background:#fff;border-left:1px solid #a0a0a0;"></div><div class="cell" style="left:332px;top:0;width:80px;height:22px;background:#fff;border-left:1px solid #a0a0a0;"></div><div class="cell" style="left:254px;top:0;width:78px;height:22px;background:#fff;border-left:1px solid #a0a0a0;"></div><div class="cell" style="left:190px;top:0;width:64px;height:22px;background:#fff;border-left:1px solid #a0a0a0;"></div><div class="cell" style="left:109px;top:0;width:81px;height:22px;background:#c0ffc0;border-left:1px solid #a0a0a0;"></div><div class="cell" style="left:69px;top:0;width:40px;height:22px;background:#fff;border-left:1px solid #a0a0a0;"><div class="chk" style="left:13px;top:4px"></div></div><div class="cell" style="left:0px;top:0;width:69px;height:22px;background:#fff;border-left:1px solid #a0a0a0;"></div></div>
<div style="left:931px;width:400px;text-align:right;top:319.0px;height:20px;line-height:20px;white-space:nowrap;font-size:11.5px;"><span style="display:inline-block;transform:scaleX(0.9600);transform-origin:right center;">26/02/2017</span></div>
<div style="left:861px;width:400px;text-align:right;top:319.0px;height:20px;line-height:20px;white-space:nowrap;font-size:11.5px;"><span style="display:inline-block;transform:scaleX(0.9600);transform-origin:right center;">13/03/2017</span></div>
<div style="left:791px;width:400px;text-align:right;top:319.0px;height:20px;line-height:20px;white-space:nowrap;font-size:11.5px;"><span style="display:inline-block;transform:scaleX(0.9600);transform-origin:right center;">21212112</span></div>
<div style="left:711px;width:400px;text-align:right;top:318.5px;height:20px;line-height:20px;white-space:nowrap;font-size:12px;"><span style="display:inline-block;transform:scaleX(0.9100);transform-origin:right center;direction:rtl;unicode-bidi:plaintext;">موردين</span></div>
<div style="left:655px;width:400px;text-align:right;top:318.5px;height:20px;line-height:20px;white-space:nowrap;font-size:12px;"><span style="display:inline-block;transform:scaleX(0.9100);transform-origin:right center;direction:rtl;unicode-bidi:plaintext;">محمد عبد العال</span></div>
<div style="left:575px;width:400px;text-align:right;top:318.5px;height:20px;line-height:20px;white-space:nowrap;font-size:12px;"><span style="display:inline-block;transform:scaleX(0.9100);transform-origin:right center;direction:rtl;unicode-bidi:plaintext;">بنك مصر</span></div>
<div style="left:497px;width:400px;text-align:right;top:319.0px;height:20px;line-height:20px;white-space:nowrap;font-size:11.5px;"><span style="display:inline-block;transform:scaleX(0.9600);transform-origin:right center;">100</span></div>
<div style="left:433px;width:400px;text-align:right;top:319.0px;height:20px;line-height:20px;white-space:nowrap;font-size:11.5px;"><span style="display:inline-block;transform:scaleX(0.9600);transform-origin:right center;">2121</span></div>
<div style="left:312px;width:400px;text-align:right;top:319.0px;height:20px;line-height:20px;white-space:nowrap;font-size:11.5px;"><span style="display:inline-block;transform:scaleX(0.9600);transform-origin:right center;">0</span></div>
<div style="left:648px;top:340px;width:689px;height:22px"><div class="cell" style="left:618px;top:0;width:71px;height:22px;background:#fff;border-left:1px solid #a0a0a0;border-right:1px solid #a0a0a0;"></div><div class="cell" style="left:548px;top:0;width:70px;height:22px;background:#fff;border-left:1px solid #a0a0a0;"></div><div class="cell" style="left:468px;top:0;width:80px;height:22px;background:#fff;border-left:1px solid #a0a0a0;"></div><div class="cell" style="left:412px;top:0;width:56px;height:22px;background:#fff;border-left:1px solid #a0a0a0;"></div><div class="cell" style="left:332px;top:0;width:80px;height:22px;background:#fff;border-left:1px solid #a0a0a0;"></div><div class="cell" style="left:254px;top:0;width:78px;height:22px;background:#fff;border-left:1px solid #a0a0a0;"></div><div class="cell" style="left:190px;top:0;width:64px;height:22px;background:#fff;border-left:1px solid #a0a0a0;"></div><div class="cell" style="left:109px;top:0;width:81px;height:22px;background:#c0ffc0;border-left:1px solid #a0a0a0;"></div><div class="cell" style="left:69px;top:0;width:40px;height:22px;background:#fff;border-left:1px solid #a0a0a0;"><div class="chk" style="left:13px;top:4px"></div></div><div class="cell" style="left:0px;top:0;width:69px;height:22px;background:#fff;border-left:1px solid #a0a0a0;"></div></div>
<div style="left:931px;width:400px;text-align:right;top:341.0px;height:20px;line-height:20px;white-space:nowrap;font-size:11.5px;"><span style="display:inline-block;transform:scaleX(0.9600);transform-origin:right center;">26/02/2017</span></div>
<div style="left:861px;width:400px;text-align:right;top:341.0px;height:20px;line-height:20px;white-space:nowrap;font-size:11.5px;"><span style="display:inline-block;transform:scaleX(0.9600);transform-origin:right center;">13/03/2017</span></div>
<div style="left:791px;width:400px;text-align:right;top:341.0px;height:20px;line-height:20px;white-space:nowrap;font-size:11.5px;"><span style="display:inline-block;transform:scaleX(0.9600);transform-origin:right center;">335656</span></div>
<div style="left:711px;width:400px;text-align:right;top:340.5px;height:20px;line-height:20px;white-space:nowrap;font-size:12px;"><span style="display:inline-block;transform:scaleX(0.9100);transform-origin:right center;direction:rtl;unicode-bidi:plaintext;">موردين</span></div>
<div style="left:655px;width:400px;text-align:right;top:340.5px;height:20px;line-height:20px;white-space:nowrap;font-size:12px;"><span style="display:inline-block;transform:scaleX(0.9100);transform-origin:right center;direction:rtl;unicode-bidi:plaintext;">محمد عبد العال</span></div>
<div style="left:575px;width:400px;text-align:right;top:340.5px;height:20px;line-height:20px;white-space:nowrap;font-size:12px;"><span style="display:inline-block;transform:scaleX(0.9100);transform-origin:right center;direction:rtl;unicode-bidi:plaintext;">بنك مصر</span></div>
<div style="left:497px;width:400px;text-align:right;top:341.0px;height:20px;line-height:20px;white-space:nowrap;font-size:11.5px;"><span style="display:inline-block;transform:scaleX(0.9600);transform-origin:right center;">200</span></div>
<div style="left:433px;width:400px;text-align:right;top:341.0px;height:20px;line-height:20px;white-space:nowrap;font-size:11.5px;"><span style="display:inline-block;transform:scaleX(0.9600);transform-origin:right center;">212</span></div>
<div style="left:312px;width:400px;text-align:right;top:341.0px;height:20px;line-height:20px;white-space:nowrap;font-size:11.5px;"><span style="display:inline-block;transform:scaleX(0.9600);transform-origin:right center;">50</span></div>
<div style="left:648px;top:362px;width:689px;height:22px"><div class="cell" style="left:618px;top:0;width:71px;height:22px;background:#fff;border-left:1px solid #a0a0a0;border-right:1px solid #a0a0a0;"></div><div class="cell" style="left:548px;top:0;width:70px;height:22px;background:#fff;border-left:1px solid #a0a0a0;"></div><div class="cell" style="left:468px;top:0;width:80px;height:22px;background:#fff;border-left:1px solid #a0a0a0;"></div><div class="cell" style="left:412px;top:0;width:56px;height:22px;background:#fff;border-left:1px solid #a0a0a0;"></div><div class="cell" style="left:332px;top:0;width:80px;height:22px;background:#fff;border-left:1px solid #a0a0a0;"></div><div class="cell" style="left:254px;top:0;width:78px;height:22px;background:#fff;border-left:1px solid #a0a0a0;"></div><div class="cell" style="left:190px;top:0;width:64px;height:22px;background:#fff;border-left:1px solid #a0a0a0;"></div><div class="cell" style="left:109px;top:0;width:81px;height:22px;background:#c0ffc0;border-left:1px solid #a0a0a0;"></div><div class="cell" style="left:69px;top:0;width:40px;height:22px;background:#fff;border-left:1px solid #a0a0a0;"><div class="chk" style="left:13px;top:4px"></div></div><div class="cell" style="left:0px;top:0;width:69px;height:22px;background:#fff;border-left:1px solid #a0a0a0;"></div></div>
<div style="left:931px;width:400px;text-align:right;top:363.0px;height:20px;line-height:20px;white-space:nowrap;font-size:11.5px;"><span style="display:inline-block;transform:scaleX(0.9600);transform-origin:right center;">26/02/2017</span></div>
<div style="left:861px;width:400px;text-align:right;top:363.0px;height:20px;line-height:20px;white-space:nowrap;font-size:11.5px;"><span style="display:inline-block;transform:scaleX(0.9600);transform-origin:right center;">13/03/2017</span></div>
<div style="left:791px;width:400px;text-align:right;top:363.0px;height:20px;line-height:20px;white-space:nowrap;font-size:11.5px;"><span style="display:inline-block;transform:scaleX(0.9600);transform-origin:right center;">1222</span></div>
<div style="left:711px;width:400px;text-align:right;top:362.5px;height:20px;line-height:20px;white-space:nowrap;font-size:12px;"><span style="display:inline-block;transform:scaleX(0.9100);transform-origin:right center;direction:rtl;unicode-bidi:plaintext;">موردين</span></div>
<div style="left:655px;width:400px;text-align:right;top:362.5px;height:20px;line-height:20px;white-space:nowrap;font-size:12px;"><span style="display:inline-block;transform:scaleX(0.9100);transform-origin:right center;direction:rtl;unicode-bidi:plaintext;">محمد عبد العال</span></div>
<div style="left:575px;width:400px;text-align:right;top:362.5px;height:20px;line-height:20px;white-space:nowrap;font-size:12px;"><span style="display:inline-block;transform:scaleX(0.9100);transform-origin:right center;direction:rtl;unicode-bidi:plaintext;">بنك مصر</span></div>
<div style="left:497px;width:400px;text-align:right;top:363.0px;height:20px;line-height:20px;white-space:nowrap;font-size:11.5px;"><span style="display:inline-block;transform:scaleX(0.9600);transform-origin:right center;">121</span></div>
<div style="left:312px;width:400px;text-align:right;top:363.0px;height:20px;line-height:20px;white-space:nowrap;font-size:11.5px;"><span style="display:inline-block;transform:scaleX(0.9600);transform-origin:right center;">0</span></div>
<div style="left:648px;top:384px;width:689px;height:22px"><div class="cell" style="left:618px;top:0;width:71px;height:22px;background:#fff;border-left:1px solid #a0a0a0;border-right:1px solid #a0a0a0;"></div><div class="cell" style="left:548px;top:0;width:70px;height:22px;background:#fff;border-left:1px solid #a0a0a0;"></div><div class="cell" style="left:468px;top:0;width:80px;height:22px;background:#fff;border-left:1px solid #a0a0a0;"></div><div class="cell" style="left:412px;top:0;width:56px;height:22px;background:#fff;border-left:1px solid #a0a0a0;"></div><div class="cell" style="left:332px;top:0;width:80px;height:22px;background:#fff;border-left:1px solid #a0a0a0;"></div><div class="cell" style="left:254px;top:0;width:78px;height:22px;background:#fff;border-left:1px solid #a0a0a0;"></div><div class="cell" style="left:190px;top:0;width:64px;height:22px;background:#fff;border-left:1px solid #a0a0a0;"></div><div class="cell" style="left:109px;top:0;width:81px;height:22px;background:#c0ffc0;border-left:1px solid #a0a0a0;"></div><div class="cell" style="left:69px;top:0;width:40px;height:22px;background:#fff;border-left:1px solid #a0a0a0;"><div class="chk" style="left:13px;top:4px"></div></div><div class="cell" style="left:0px;top:0;width:69px;height:22px;background:#fff;border-left:1px solid #a0a0a0;"></div></div>
<div style="left:931px;width:400px;text-align:right;top:385.0px;height:20px;line-height:20px;white-space:nowrap;font-size:11.5px;"><span style="display:inline-block;transform:scaleX(0.9600);transform-origin:right center;">20/11/2018</span></div>
<div style="left:861px;width:400px;text-align:right;top:385.0px;height:20px;line-height:20px;white-space:nowrap;font-size:11.5px;"><span style="display:inline-block;transform:scaleX(0.9600);transform-origin:right center;">15/12/2018</span></div>
<div style="left:791px;width:400px;text-align:right;top:385.0px;height:20px;line-height:20px;white-space:nowrap;font-size:11.5px;"><span style="display:inline-block;transform:scaleX(0.9600);transform-origin:right center;">3434</span></div>
<div style="left:711px;width:400px;text-align:right;top:384.5px;height:20px;line-height:20px;white-space:nowrap;font-size:12px;"><span style="display:inline-block;transform:scaleX(0.9100);transform-origin:right center;direction:rtl;unicode-bidi:plaintext;">موردين</span></div>
<div style="left:655px;width:400px;text-align:right;top:384.5px;height:20px;line-height:20px;white-space:nowrap;font-size:12px;"><span style="display:inline-block;transform:scaleX(0.9100);transform-origin:right center;direction:rtl;unicode-bidi:plaintext;">محمد عبد العال</span></div>
<div style="left:575px;width:400px;text-align:right;top:384.5px;height:20px;line-height:20px;white-space:nowrap;font-size:12px;"><span style="display:inline-block;transform:scaleX(0.9100);transform-origin:right center;direction:rtl;unicode-bidi:plaintext;">بنك مصر</span></div>
<div style="left:497px;width:400px;text-align:right;top:385.0px;height:20px;line-height:20px;white-space:nowrap;font-size:11.5px;"><span style="display:inline-block;transform:scaleX(0.9600);transform-origin:right center;">5005</span></div>
<div style="left:312px;width:400px;text-align:right;top:385.0px;height:20px;line-height:20px;white-space:nowrap;font-size:11.5px;"><span style="display:inline-block;transform:scaleX(0.9600);transform-origin:right center;">0</span></div>
<div style="left:648px;top:406px;width:689px;height:22px"><div class="cell" style="left:618px;top:0;width:71px;height:22px;background:#fff;border-left:1px solid #a0a0a0;border-right:1px solid #a0a0a0;"></div><div class="cell" style="left:548px;top:0;width:70px;height:22px;background:#fff;border-left:1px solid #a0a0a0;"></div><div class="cell" style="left:468px;top:0;width:80px;height:22px;background:#fff;border-left:1px solid #a0a0a0;"></div><div class="cell" style="left:412px;top:0;width:56px;height:22px;background:#fff;border-left:1px solid #a0a0a0;"></div><div class="cell" style="left:332px;top:0;width:80px;height:22px;background:#fff;border-left:1px solid #a0a0a0;"></div><div class="cell" style="left:254px;top:0;width:78px;height:22px;background:#fff;border-left:1px solid #a0a0a0;"></div><div class="cell" style="left:190px;top:0;width:64px;height:22px;background:#fff;border-left:1px solid #a0a0a0;"></div><div class="cell" style="left:109px;top:0;width:81px;height:22px;background:#c0ffc0;border-left:1px solid #a0a0a0;"></div><div class="cell" style="left:69px;top:0;width:40px;height:22px;background:#fff;border-left:1px solid #a0a0a0;"><div class="chk" style="left:13px;top:4px"></div></div><div class="cell" style="left:0px;top:0;width:69px;height:22px;background:#fff;border-left:1px solid #a0a0a0;"></div></div>
<div style="left:931px;width:400px;text-align:right;top:407.0px;height:20px;line-height:20px;white-space:nowrap;font-size:11.5px;"><span style="display:inline-block;transform:scaleX(0.9600);transform-origin:right center;">02/05/2020</span></div>
<div style="left:861px;width:400px;text-align:right;top:407.0px;height:20px;line-height:20px;white-space:nowrap;font-size:11.5px;"><span style="display:inline-block;transform:scaleX(0.9600);transform-origin:right center;">05/07/2020</span></div>
<div style="left:791px;width:400px;text-align:right;top:406.5px;height:20px;line-height:20px;white-space:nowrap;font-size:12px;"><span style="display:inline-block;transform:scaleX(0.9100);transform-origin:right center;direction:rtl;unicode-bidi:plaintext;">بلربلى</span></div>
<div style="left:711px;width:400px;text-align:right;top:406.5px;height:20px;line-height:20px;white-space:nowrap;font-size:12px;"><span style="display:inline-block;transform:scaleX(0.9100);transform-origin:right center;direction:rtl;unicode-bidi:plaintext;">موردين</span></div>
<div style="left:655px;width:400px;text-align:right;top:406.5px;height:20px;line-height:20px;white-space:nowrap;font-size:12px;"><span style="display:inline-block;transform:scaleX(0.9100);transform-origin:right center;direction:rtl;unicode-bidi:plaintext;">محمد عبد العال</span></div>
<div style="left:575px;width:400px;text-align:right;top:406.5px;height:20px;line-height:20px;white-space:nowrap;font-size:12px;"><span style="display:inline-block;transform:scaleX(0.9100);transform-origin:right center;direction:rtl;unicode-bidi:plaintext;">بنك مصر</span></div>
<div style="left:497px;width:400px;text-align:right;top:407.0px;height:20px;line-height:20px;white-space:nowrap;font-size:11.5px;"><span style="display:inline-block;transform:scaleX(0.9600);transform-origin:right center;">5000</span></div>
<div style="left:433px;width:400px;text-align:right;top:407.0px;height:20px;line-height:20px;white-space:nowrap;font-size:11.5px;"><span style="display:inline-block;transform:scaleX(0.9600);transform-origin:right center;">ttttttttt</span></div>
<div style="left:312px;width:400px;text-align:right;top:407.0px;height:20px;line-height:20px;white-space:nowrap;font-size:11.5px;"><span style="display:inline-block;transform:scaleX(0.9600);transform-origin:right center;">0</span></div>
<div style="left:648px;top:428px;width:689px;height:22px"><div class="cell" style="left:618px;top:0;width:71px;height:22px;background:#fff;border-left:1px solid #a0a0a0;border-right:1px solid #a0a0a0;"></div><div class="cell" style="left:548px;top:0;width:70px;height:22px;background:#fff;border-left:1px solid #a0a0a0;"></div><div class="cell" style="left:468px;top:0;width:80px;height:22px;background:#fff;border-left:1px solid #a0a0a0;"></div><div class="cell" style="left:412px;top:0;width:56px;height:22px;background:#fff;border-left:1px solid #a0a0a0;"></div><div class="cell" style="left:332px;top:0;width:80px;height:22px;background:#fff;border-left:1px solid #a0a0a0;"></div><div class="cell" style="left:254px;top:0;width:78px;height:22px;background:#fff;border-left:1px solid #a0a0a0;"></div><div class="cell" style="left:190px;top:0;width:64px;height:22px;background:#fff;border-left:1px solid #a0a0a0;"></div><div class="cell" style="left:109px;top:0;width:81px;height:22px;background:#c0ffc0;border-left:1px solid #a0a0a0;"></div><div class="cell" style="left:69px;top:0;width:40px;height:22px;background:#fff;border-left:1px solid #a0a0a0;"><div class="chk" style="left:13px;top:4px"></div></div><div class="cell" style="left:0px;top:0;width:69px;height:22px;background:#fff;border-left:1px solid #a0a0a0;"></div></div>
<div style="left:931px;width:400px;text-align:right;top:429.0px;height:20px;line-height:20px;white-space:nowrap;font-size:11.5px;"><span style="display:inline-block;transform:scaleX(0.9600);transform-origin:right center;">18/10/2020</span></div>
<div style="left:861px;width:400px;text-align:right;top:429.0px;height:20px;line-height:20px;white-space:nowrap;font-size:11.5px;"><span style="display:inline-block;transform:scaleX(0.9600);transform-origin:right center;">19/10/2020</span></div>
<div style="left:791px;width:400px;text-align:right;top:429.0px;height:20px;line-height:20px;white-space:nowrap;font-size:11.5px;"><span style="display:inline-block;transform:scaleX(0.9600);transform-origin:right center;">454564564</span></div>
<div style="left:711px;width:400px;text-align:right;top:428.5px;height:20px;line-height:20px;white-space:nowrap;font-size:12px;"><span style="display:inline-block;transform:scaleX(0.9100);transform-origin:right center;direction:rtl;unicode-bidi:plaintext;">موردين</span></div>
<div style="left:655px;width:400px;text-align:right;top:428.5px;height:20px;line-height:20px;white-space:nowrap;font-size:12px;"><span style="display:inline-block;transform:scaleX(0.9100);transform-origin:right center;direction:rtl;unicode-bidi:plaintext;">محمد عبد العال</span></div>
<div style="left:575px;width:400px;text-align:right;top:428.5px;height:20px;line-height:20px;white-space:nowrap;font-size:12px;"><span style="display:inline-block;transform:scaleX(0.9100);transform-origin:right center;direction:rtl;unicode-bidi:plaintext;">بنك مصر</span></div>
<div style="left:497px;width:400px;text-align:right;top:429.0px;height:20px;line-height:20px;white-space:nowrap;font-size:11.5px;"><span style="display:inline-block;transform:scaleX(0.9600);transform-origin:right center;">6000</span></div>
<div style="left:433px;width:400px;text-align:right;top:428.5px;height:20px;line-height:20px;white-space:nowrap;font-size:12px;"><span style="display:inline-block;transform:scaleX(0.9100);transform-origin:right center;direction:rtl;unicode-bidi:plaintext;">لابا</span></div>
<div style="left:312px;width:400px;text-align:right;top:429.0px;height:20px;line-height:20px;white-space:nowrap;font-size:11.5px;"><span style="display:inline-block;transform:scaleX(0.9600);transform-origin:right center;">0</span></div>
<div style="left:648px;top:450px;width:689px;height:22px"><div class="cell" style="left:618px;top:0;width:71px;height:22px;background:#fff;border-left:1px solid #a0a0a0;border-right:1px solid #a0a0a0;"></div><div class="cell" style="left:548px;top:0;width:70px;height:22px;background:#fff;border-left:1px solid #a0a0a0;"></div><div class="cell" style="left:468px;top:0;width:80px;height:22px;background:#fff;border-left:1px solid #a0a0a0;"></div><div class="cell" style="left:412px;top:0;width:56px;height:22px;background:#fff;border-left:1px solid #a0a0a0;"></div><div class="cell" style="left:332px;top:0;width:80px;height:22px;background:#fff;border-left:1px solid #a0a0a0;"></div><div class="cell" style="left:254px;top:0;width:78px;height:22px;background:#fff;border-left:1px solid #a0a0a0;"></div><div class="cell" style="left:190px;top:0;width:64px;height:22px;background:#fff;border-left:1px solid #a0a0a0;"></div><div class="cell" style="left:109px;top:0;width:81px;height:22px;background:#c0ffc0;border-left:1px solid #a0a0a0;"></div><div class="cell" style="left:69px;top:0;width:40px;height:22px;background:#fff;border-left:1px solid #a0a0a0;"><div class="chk" style="left:13px;top:4px"></div></div><div class="cell" style="left:0px;top:0;width:69px;height:22px;background:#fff;border-left:1px solid #a0a0a0;"></div></div>
<div style="left:931px;width:400px;text-align:right;top:451.0px;height:20px;line-height:20px;white-space:nowrap;font-size:11.5px;"><span style="display:inline-block;transform:scaleX(0.9600);transform-origin:right center;">07/09/2021</span></div>
<div style="left:861px;width:400px;text-align:right;top:451.0px;height:20px;line-height:20px;white-space:nowrap;font-size:11.5px;"><span style="display:inline-block;transform:scaleX(0.9600);transform-origin:right center;">07/09/2021</span></div>
<div style="left:791px;width:400px;text-align:right;top:451.0px;height:20px;line-height:20px;white-space:nowrap;font-size:11.5px;"><span style="display:inline-block;transform:scaleX(0.9600);transform-origin:right center;">4545</span></div>
<div style="left:711px;width:400px;text-align:right;top:450.5px;height:20px;line-height:20px;white-space:nowrap;font-size:12px;"><span style="display:inline-block;transform:scaleX(0.9100);transform-origin:right center;direction:rtl;unicode-bidi:plaintext;">موردين</span></div>
<div style="left:655px;width:400px;text-align:right;top:450.5px;height:20px;line-height:20px;white-space:nowrap;font-size:12px;"><span style="display:inline-block;transform:scaleX(0.9100);transform-origin:right center;direction:rtl;unicode-bidi:plaintext;">محمد عبد العال</span></div>
<div style="left:575px;width:400px;text-align:right;top:450.5px;height:20px;line-height:20px;white-space:nowrap;font-size:12px;"><span style="display:inline-block;transform:scaleX(0.9100);transform-origin:right center;direction:rtl;unicode-bidi:plaintext;">الخزنة الرئيسية</span></div>
<div style="left:497px;width:400px;text-align:right;top:451.0px;height:20px;line-height:20px;white-space:nowrap;font-size:11.5px;"><span style="display:inline-block;transform:scaleX(0.9600);transform-origin:right center;">5666</span></div>
<div style="left:312px;width:400px;text-align:right;top:451.0px;height:20px;line-height:20px;white-space:nowrap;font-size:11.5px;"><span style="display:inline-block;transform:scaleX(0.9600);transform-origin:right center;">0</span></div>
<div style="left:648px;top:472px;width:689px;height:22px"><div class="cell" style="left:618px;top:0;width:71px;height:22px;background:#fff;border-left:1px solid #a0a0a0;border-right:1px solid #a0a0a0;"></div><div class="cell" style="left:548px;top:0;width:70px;height:22px;background:#fff;border-left:1px solid #a0a0a0;"></div><div class="cell" style="left:468px;top:0;width:80px;height:22px;background:#fff;border-left:1px solid #a0a0a0;"></div><div class="cell" style="left:412px;top:0;width:56px;height:22px;background:#fff;border-left:1px solid #a0a0a0;"></div><div class="cell" style="left:332px;top:0;width:80px;height:22px;background:#fff;border-left:1px solid #a0a0a0;"></div><div class="cell" style="left:254px;top:0;width:78px;height:22px;background:#fff;border-left:1px solid #a0a0a0;"></div><div class="cell" style="left:190px;top:0;width:64px;height:22px;background:#fff;border-left:1px solid #a0a0a0;"></div><div class="cell" style="left:109px;top:0;width:81px;height:22px;background:#c0ffc0;border-left:1px solid #a0a0a0;"></div><div class="cell" style="left:69px;top:0;width:40px;height:22px;background:#fff;border-left:1px solid #a0a0a0;"><div class="chk" style="left:13px;top:4px"></div></div><div class="cell" style="left:0px;top:0;width:69px;height:22px;background:#fff;border-left:1px solid #a0a0a0;"></div></div>
<div style="left:931px;width:400px;text-align:right;top:473.0px;height:20px;line-height:20px;white-space:nowrap;font-size:11.5px;"><span style="display:inline-block;transform:scaleX(0.9600);transform-origin:right center;">07/09/2021</span></div>
<div style="left:861px;width:400px;text-align:right;top:473.0px;height:20px;line-height:20px;white-space:nowrap;font-size:11.5px;"><span style="display:inline-block;transform:scaleX(0.9600);transform-origin:right center;">07/09/2021</span></div>
<div style="left:791px;width:400px;text-align:right;top:473.0px;height:20px;line-height:20px;white-space:nowrap;font-size:11.5px;"><span style="display:inline-block;transform:scaleX(0.9600);transform-origin:right center;">3434343</span></div>
<div style="left:711px;width:400px;text-align:right;top:472.5px;height:20px;line-height:20px;white-space:nowrap;font-size:12px;"><span style="display:inline-block;transform:scaleX(0.9100);transform-origin:right center;direction:rtl;unicode-bidi:plaintext;">موردين</span></div>
<div style="left:655px;width:400px;text-align:right;top:472.5px;height:20px;line-height:20px;white-space:nowrap;font-size:12px;"><span style="display:inline-block;transform:scaleX(0.9100);transform-origin:right center;direction:rtl;unicode-bidi:plaintext;">محمد عبد العال</span></div>
<div style="left:575px;width:400px;text-align:right;top:472.5px;height:20px;line-height:20px;white-space:nowrap;font-size:12px;"><span style="display:inline-block;transform:scaleX(0.9100);transform-origin:right center;direction:rtl;unicode-bidi:plaintext;">بنك مصر</span></div>
<div style="left:497px;width:400px;text-align:right;top:473.0px;height:20px;line-height:20px;white-space:nowrap;font-size:11.5px;"><span style="display:inline-block;transform:scaleX(0.9600);transform-origin:right center;">9900</span></div>
<div style="left:433px;width:400px;text-align:right;top:473.0px;height:20px;line-height:20px;white-space:nowrap;font-size:11.5px;"><span style="display:inline-block;transform:scaleX(0.9600);transform-origin:right center;">fgdfg</span></div>
<div style="left:312px;width:400px;text-align:right;top:473.0px;height:20px;line-height:20px;white-space:nowrap;font-size:11.5px;"><span style="display:inline-block;transform:scaleX(0.9600);transform-origin:right center;">0</span></div>
<div style="left:648px;top:494px;width:689px;height:22px"><div class="cell" style="left:618px;top:0;width:71px;height:22px;background:#fff;border-left:1px solid #a0a0a0;border-right:1px solid #a0a0a0;"></div><div class="cell" style="left:548px;top:0;width:70px;height:22px;background:#fff;border-left:1px solid #a0a0a0;"></div><div class="cell" style="left:468px;top:0;width:80px;height:22px;background:#fff;border-left:1px solid #a0a0a0;"></div><div class="cell" style="left:412px;top:0;width:56px;height:22px;background:#fff;border-left:1px solid #a0a0a0;"></div><div class="cell" style="left:332px;top:0;width:80px;height:22px;background:#fff;border-left:1px solid #a0a0a0;"></div><div class="cell" style="left:254px;top:0;width:78px;height:22px;background:#fff;border-left:1px solid #a0a0a0;"></div><div class="cell" style="left:190px;top:0;width:64px;height:22px;background:#fff;border-left:1px solid #a0a0a0;"></div><div class="cell" style="left:109px;top:0;width:81px;height:22px;background:#c0ffc0;border-left:1px solid #a0a0a0;"></div><div class="cell" style="left:69px;top:0;width:40px;height:22px;background:#fff;border-left:1px solid #a0a0a0;"><div class="chk" style="left:13px;top:4px"></div></div><div class="cell" style="left:0px;top:0;width:69px;height:22px;background:#fff;border-left:1px solid #a0a0a0;"></div></div>
<div style="left:931px;width:400px;text-align:right;top:495.0px;height:20px;line-height:20px;white-space:nowrap;font-size:11.5px;"><span style="display:inline-block;transform:scaleX(0.9600);transform-origin:right center;">10/10/2021</span></div>
<div style="left:861px;width:400px;text-align:right;top:495.0px;height:20px;line-height:20px;white-space:nowrap;font-size:11.5px;"><span style="display:inline-block;transform:scaleX(0.9600);transform-origin:right center;">10/10/2021</span></div>
<div style="left:791px;width:400px;text-align:right;top:495.0px;height:20px;line-height:20px;white-space:nowrap;font-size:11.5px;"><span style="display:inline-block;transform:scaleX(0.9600);transform-origin:right center;">212</span></div>
<div style="left:711px;width:400px;text-align:right;top:494.5px;height:20px;line-height:20px;white-space:nowrap;font-size:12px;"><span style="display:inline-block;transform:scaleX(0.9100);transform-origin:right center;direction:rtl;unicode-bidi:plaintext;">موردين</span></div>
<div style="left:655px;width:400px;text-align:right;top:494.5px;height:20px;line-height:20px;white-space:nowrap;font-size:12px;"><span style="display:inline-block;transform:scaleX(0.9100);transform-origin:right center;direction:rtl;unicode-bidi:plaintext;">محمد عبد العال</span></div>
<div style="left:575px;width:400px;text-align:right;top:494.5px;height:20px;line-height:20px;white-space:nowrap;font-size:12px;"><span style="display:inline-block;transform:scaleX(0.9100);transform-origin:right center;direction:rtl;unicode-bidi:plaintext;">بنك مصر</span></div>
<div style="left:497px;width:400px;text-align:right;top:495.0px;height:20px;line-height:20px;white-space:nowrap;font-size:11.5px;"><span style="display:inline-block;transform:scaleX(0.9600);transform-origin:right center;">200</span></div>
<div style="left:312px;width:400px;text-align:right;top:495.0px;height:20px;line-height:20px;white-space:nowrap;font-size:11.5px;"><span style="display:inline-block;transform:scaleX(0.9600);transform-origin:right center;">0</span></div>
<div style="left:648px;top:516px;width:689px;height:22px"><div class="cell" style="left:618px;top:0;width:71px;height:22px;background:#fff;border-left:1px solid #a0a0a0;border-right:1px solid #a0a0a0;"></div><div class="cell" style="left:548px;top:0;width:70px;height:22px;background:#fff;border-left:1px solid #a0a0a0;"></div><div class="cell" style="left:468px;top:0;width:80px;height:22px;background:#fff;border-left:1px solid #a0a0a0;"></div><div class="cell" style="left:412px;top:0;width:56px;height:22px;background:#fff;border-left:1px solid #a0a0a0;"></div><div class="cell" style="left:332px;top:0;width:80px;height:22px;background:#fff;border-left:1px solid #a0a0a0;"></div><div class="cell" style="left:254px;top:0;width:78px;height:22px;background:#fff;border-left:1px solid #a0a0a0;"></div><div class="cell" style="left:190px;top:0;width:64px;height:22px;background:#fff;border-left:1px solid #a0a0a0;"></div><div class="cell" style="left:109px;top:0;width:81px;height:22px;background:#c0ffc0;border-left:1px solid #a0a0a0;"></div><div class="cell" style="left:69px;top:0;width:40px;height:22px;background:#fff;border-left:1px solid #a0a0a0;"><div class="chk" style="left:13px;top:4px"></div></div><div class="cell" style="left:0px;top:0;width:69px;height:22px;background:#fff;border-left:1px solid #a0a0a0;"></div></div>
<div style="left:931px;width:400px;text-align:right;top:517.0px;height:20px;line-height:20px;white-space:nowrap;font-size:11.5px;"><span style="display:inline-block;transform:scaleX(0.9600);transform-origin:right center;">21/01/2024</span></div>
<div style="left:861px;width:400px;text-align:right;top:517.0px;height:20px;line-height:20px;white-space:nowrap;font-size:11.5px;"><span style="display:inline-block;transform:scaleX(0.9600);transform-origin:right center;">21/01/2024</span></div>
<div style="left:791px;width:400px;text-align:right;top:517.0px;height:20px;line-height:20px;white-space:nowrap;font-size:11.5px;"><span style="display:inline-block;transform:scaleX(0.9600);transform-origin:right center;">85885858</span></div>
<div style="left:711px;width:400px;text-align:right;top:516.5px;height:20px;line-height:20px;white-space:nowrap;font-size:12px;"><span style="display:inline-block;transform:scaleX(0.9100);transform-origin:right center;direction:rtl;unicode-bidi:plaintext;">موردين</span></div>
<div style="left:655px;width:400px;text-align:right;top:516.5px;height:20px;line-height:20px;white-space:nowrap;font-size:12px;"><span style="display:inline-block;transform:scaleX(0.9100);transform-origin:right center;direction:rtl;unicode-bidi:plaintext;">محمد عبد العال</span></div>
<div style="left:575px;width:400px;text-align:right;top:516.5px;height:20px;line-height:20px;white-space:nowrap;font-size:12px;"><span style="display:inline-block;transform:scaleX(0.9100);transform-origin:right center;direction:rtl;unicode-bidi:plaintext;">بنك مصر</span></div>
<div style="left:497px;width:400px;text-align:right;top:517.0px;height:20px;line-height:20px;white-space:nowrap;font-size:11.5px;"><span style="display:inline-block;transform:scaleX(0.9600);transform-origin:right center;">505</span></div>
<div style="left:312px;width:400px;text-align:right;top:517.0px;height:20px;line-height:20px;white-space:nowrap;font-size:11.5px;"><span style="display:inline-block;transform:scaleX(0.9600);transform-origin:right center;">0</span></div>
<div style="left:648px;top:538px;width:689px;height:22px"><div class="cell" style="left:618px;top:0;width:71px;height:22px;background:#fff;border-left:1px solid #a0a0a0;border-right:1px solid #a0a0a0;"></div><div class="cell" style="left:548px;top:0;width:70px;height:22px;background:#fff;border-left:1px solid #a0a0a0;"></div><div class="cell" style="left:468px;top:0;width:80px;height:22px;background:#fff;border-left:1px solid #a0a0a0;"></div><div class="cell" style="left:412px;top:0;width:56px;height:22px;background:#fff;border-left:1px solid #a0a0a0;"></div><div class="cell" style="left:332px;top:0;width:80px;height:22px;background:#fff;border-left:1px solid #a0a0a0;"></div><div class="cell" style="left:254px;top:0;width:78px;height:22px;background:#fff;border-left:1px solid #a0a0a0;"></div><div class="cell" style="left:190px;top:0;width:64px;height:22px;background:#fff;border-left:1px solid #a0a0a0;"></div><div class="cell" style="left:109px;top:0;width:81px;height:22px;background:#c0ffc0;border-left:1px solid #a0a0a0;"></div><div class="cell" style="left:69px;top:0;width:40px;height:22px;background:#fff;border-left:1px solid #a0a0a0;"><div class="chk" style="left:13px;top:4px"></div></div><div class="cell" style="left:0px;top:0;width:69px;height:22px;background:#fff;border-left:1px solid #a0a0a0;"></div></div>
<div style="left:931px;width:400px;text-align:right;top:539.0px;height:20px;line-height:20px;white-space:nowrap;font-size:11.5px;"><span style="display:inline-block;transform:scaleX(0.9600);transform-origin:right center;">13/01/2024</span></div>
<div style="left:861px;width:400px;text-align:right;top:539.0px;height:20px;line-height:20px;white-space:nowrap;font-size:11.5px;"><span style="display:inline-block;transform:scaleX(0.9600);transform-origin:right center;">13/01/2024</span></div>
<div style="left:791px;width:400px;text-align:right;top:539.0px;height:20px;line-height:20px;white-space:nowrap;font-size:11.5px;"><span style="display:inline-block;transform:scaleX(0.9600);transform-origin:right center;">jkklj</span></div>
<div style="left:711px;width:400px;text-align:right;top:538.5px;height:20px;line-height:20px;white-space:nowrap;font-size:12px;"><span style="display:inline-block;transform:scaleX(0.9100);transform-origin:right center;direction:rtl;unicode-bidi:plaintext;">مصاريف</span></div>
<div style="left:655px;width:400px;text-align:right;top:538.5px;height:20px;line-height:20px;white-space:nowrap;font-size:12px;"><span style="display:inline-block;transform:scaleX(0.9100);transform-origin:right center;direction:rtl;unicode-bidi:plaintext;">مياه</span></div>
<div style="left:575px;width:400px;text-align:right;top:538.5px;height:20px;line-height:20px;white-space:nowrap;font-size:12px;"><span style="display:inline-block;transform:scaleX(0.9100);transform-origin:right center;direction:rtl;unicode-bidi:plaintext;">بنك مصر</span></div>
<div style="left:497px;width:400px;text-align:right;top:539.0px;height:20px;line-height:20px;white-space:nowrap;font-size:11.5px;"><span style="display:inline-block;transform:scaleX(0.9600);transform-origin:right center;">100</span></div>
<div style="left:312px;width:400px;text-align:right;top:539.0px;height:20px;line-height:20px;white-space:nowrap;font-size:11.5px;"><span style="display:inline-block;transform:scaleX(0.9600);transform-origin:right center;">0</span></div>
<div style="left:648px;top:560px;width:689px;height:22px"><div class="cell" style="left:618px;top:0;width:71px;height:22px;background:#fff;border-left:1px solid #a0a0a0;border-right:1px solid #a0a0a0;"></div><div class="cell" style="left:548px;top:0;width:70px;height:22px;background:#fff;border-left:1px solid #a0a0a0;"></div><div class="cell" style="left:468px;top:0;width:80px;height:22px;background:#fff;border-left:1px solid #a0a0a0;"></div><div class="cell" style="left:412px;top:0;width:56px;height:22px;background:#fff;border-left:1px solid #a0a0a0;"></div><div class="cell" style="left:332px;top:0;width:80px;height:22px;background:#fff;border-left:1px solid #a0a0a0;"></div><div class="cell" style="left:254px;top:0;width:78px;height:22px;background:#fff;border-left:1px solid #a0a0a0;"></div><div class="cell" style="left:190px;top:0;width:64px;height:22px;background:#fff;border-left:1px solid #a0a0a0;"></div><div class="cell" style="left:109px;top:0;width:81px;height:22px;background:#c0ffc0;border-left:1px solid #a0a0a0;"></div><div class="cell" style="left:69px;top:0;width:40px;height:22px;background:#fff;border-left:1px solid #a0a0a0;"><div class="chk" style="left:13px;top:4px"></div></div><div class="cell" style="left:0px;top:0;width:69px;height:22px;background:#fff;border-left:1px solid #a0a0a0;"></div></div>
<div style="left:931px;width:400px;text-align:right;top:561.0px;height:20px;line-height:20px;white-space:nowrap;font-size:11.5px;"><span style="display:inline-block;transform:scaleX(0.9600);transform-origin:right center;">21/01/2024</span></div>
<div style="left:861px;width:400px;text-align:right;top:561.0px;height:20px;line-height:20px;white-space:nowrap;font-size:11.5px;"><span style="display:inline-block;transform:scaleX(0.9600);transform-origin:right center;">21/01/2024</span></div>
<div style="left:791px;width:400px;text-align:right;top:561.0px;height:20px;line-height:20px;white-space:nowrap;font-size:11.5px;"><span style="display:inline-block;transform:scaleX(0.9600);transform-origin:right center;">4344</span></div>
<div style="left:711px;width:400px;text-align:right;top:560.5px;height:20px;line-height:20px;white-space:nowrap;font-size:12px;"><span style="display:inline-block;transform:scaleX(0.9100);transform-origin:right center;direction:rtl;unicode-bidi:plaintext;">مصاريف</span></div>
<div style="left:655px;width:400px;text-align:right;top:560.5px;height:20px;line-height:20px;white-space:nowrap;font-size:12px;"><span style="display:inline-block;transform:scaleX(0.9100);transform-origin:right center;direction:rtl;unicode-bidi:plaintext;">مياه</span></div>
<div style="left:575px;width:400px;text-align:right;top:560.5px;height:20px;line-height:20px;white-space:nowrap;font-size:12px;"><span style="display:inline-block;transform:scaleX(0.9100);transform-origin:right center;direction:rtl;unicode-bidi:plaintext;">بنك مصر</span></div>
<div style="left:497px;width:400px;text-align:right;top:561.0px;height:20px;line-height:20px;white-space:nowrap;font-size:11.5px;"><span style="display:inline-block;transform:scaleX(0.9600);transform-origin:right center;">6000</span></div>
<div style="left:312px;width:400px;text-align:right;top:561.0px;height:20px;line-height:20px;white-space:nowrap;font-size:11.5px;"><span style="display:inline-block;transform:scaleX(0.9600);transform-origin:right center;">0</span></div>
<div style="left:648px;top:582px;width:689px;height:22px"><div class="cell" style="left:618px;top:0;width:71px;height:22px;background:#fff;border-left:1px solid #a0a0a0;border-right:1px solid #a0a0a0;"></div><div class="cell" style="left:548px;top:0;width:70px;height:22px;background:#fff;border-left:1px solid #a0a0a0;"></div><div class="cell" style="left:468px;top:0;width:80px;height:22px;background:#fff;border-left:1px solid #a0a0a0;"></div><div class="cell" style="left:412px;top:0;width:56px;height:22px;background:#fff;border-left:1px solid #a0a0a0;"></div><div class="cell" style="left:332px;top:0;width:80px;height:22px;background:#fff;border-left:1px solid #a0a0a0;"></div><div class="cell" style="left:254px;top:0;width:78px;height:22px;background:#fff;border-left:1px solid #a0a0a0;"></div><div class="cell" style="left:190px;top:0;width:64px;height:22px;background:#fff;border-left:1px solid #a0a0a0;"></div><div class="cell" style="left:109px;top:0;width:81px;height:22px;background:#c0ffc0;border-left:1px solid #a0a0a0;"></div><div class="cell" style="left:69px;top:0;width:40px;height:22px;background:#fff;border-left:1px solid #a0a0a0;"><div class="chk" style="left:13px;top:4px"></div></div><div class="cell" style="left:0px;top:0;width:69px;height:22px;background:#fff;border-left:1px solid #a0a0a0;"></div></div>
<div style="left:931px;width:400px;text-align:right;top:583.0px;height:20px;line-height:20px;white-space:nowrap;font-size:11.5px;"><span style="display:inline-block;transform:scaleX(0.9600);transform-origin:right center;">28/08/2016</span></div>
<div style="left:861px;width:400px;text-align:right;top:583.0px;height:20px;line-height:20px;white-space:nowrap;font-size:11.5px;"><span style="display:inline-block;transform:scaleX(0.9600);transform-origin:right center;">18/09/2016</span></div>
<div style="left:791px;width:400px;text-align:right;top:583.0px;height:20px;line-height:20px;white-space:nowrap;font-size:11.5px;"><span style="display:inline-block;transform:scaleX(0.9600);transform-origin:right center;">gfgfgf</span></div>
<div style="left:711px;width:400px;text-align:right;top:582.5px;height:20px;line-height:20px;white-space:nowrap;font-size:12px;"><span style="display:inline-block;transform:scaleX(0.9100);transform-origin:right center;direction:rtl;unicode-bidi:plaintext;">السحب</span></div>
<div style="left:655px;width:400px;text-align:right;top:583.0px;height:20px;line-height:20px;white-space:nowrap;font-size:11.5px;"><span style="display:inline-block;transform:scaleX(0.9600);transform-origin:right center;">test</span></div>
<div style="left:575px;width:400px;text-align:right;top:582.5px;height:20px;line-height:20px;white-space:nowrap;font-size:12px;"><span style="display:inline-block;transform:scaleX(0.9100);transform-origin:right center;direction:rtl;unicode-bidi:plaintext;">بنك مصر</span></div>
<div style="left:497px;width:400px;text-align:right;top:583.0px;height:20px;line-height:20px;white-space:nowrap;font-size:11.5px;"><span style="display:inline-block;transform:scaleX(0.9600);transform-origin:right center;">200</span></div>
<div style="left:312px;width:400px;text-align:right;top:583.0px;height:20px;line-height:20px;white-space:nowrap;font-size:11.5px;"><span style="display:inline-block;transform:scaleX(0.9600);transform-origin:right center;">0</span></div>
<div style="left:648px;top:604px;width:689px;height:22px"><div class="cell" style="left:618px;top:0;width:71px;height:22px;background:#fff;border-left:1px solid #a0a0a0;border-right:1px solid #a0a0a0;"></div><div class="cell" style="left:548px;top:0;width:70px;height:22px;background:#fff;border-left:1px solid #a0a0a0;"></div><div class="cell" style="left:468px;top:0;width:80px;height:22px;background:#fff;border-left:1px solid #a0a0a0;"></div><div class="cell" style="left:412px;top:0;width:56px;height:22px;background:#fff;border-left:1px solid #a0a0a0;"></div><div class="cell" style="left:332px;top:0;width:80px;height:22px;background:#fff;border-left:1px solid #a0a0a0;"></div><div class="cell" style="left:254px;top:0;width:78px;height:22px;background:#fff;border-left:1px solid #a0a0a0;"></div><div class="cell" style="left:190px;top:0;width:64px;height:22px;background:#fff;border-left:1px solid #a0a0a0;"></div><div class="cell" style="left:109px;top:0;width:81px;height:22px;background:#c0ffc0;border-left:1px solid #a0a0a0;"></div><div class="cell" style="left:69px;top:0;width:40px;height:22px;background:#fff;border-left:1px solid #a0a0a0;"><div class="chk" style="left:13px;top:4px"></div></div><div class="cell" style="left:0px;top:0;width:69px;height:22px;background:#fff;border-left:1px solid #a0a0a0;"></div></div>
<div style="left:931px;width:400px;text-align:right;top:605.0px;height:20px;line-height:20px;white-space:nowrap;font-size:11.5px;"><span style="display:inline-block;transform:scaleX(0.9600);transform-origin:right center;">16/01/2024</span></div>
<div style="left:861px;width:400px;text-align:right;top:605.0px;height:20px;line-height:20px;white-space:nowrap;font-size:11.5px;"><span style="display:inline-block;transform:scaleX(0.9600);transform-origin:right center;">16/01/2024</span></div>
<div style="left:791px;width:400px;text-align:right;top:605.0px;height:20px;line-height:20px;white-space:nowrap;font-size:11.5px;"><span style="display:inline-block;transform:scaleX(0.9600);transform-origin:right center;">212121</span></div>
<div style="left:711px;width:400px;text-align:right;top:604.5px;height:20px;line-height:20px;white-space:nowrap;font-size:12px;"><span style="display:inline-block;transform:scaleX(0.9100);transform-origin:right center;direction:rtl;unicode-bidi:plaintext;">السحب</span></div>
<div style="left:655px;width:400px;text-align:right;top:604.5px;height:20px;line-height:20px;white-space:nowrap;font-size:12px;"><span style="display:inline-block;transform:scaleX(0.9100);transform-origin:right center;direction:rtl;unicode-bidi:plaintext;">محمد عبد العال</span></div>
<div style="left:575px;width:400px;text-align:right;top:604.5px;height:20px;line-height:20px;white-space:nowrap;font-size:12px;"><span style="display:inline-block;transform:scaleX(0.9100);transform-origin:right center;direction:rtl;unicode-bidi:plaintext;">بنك مصر</span></div>
<div style="left:497px;width:400px;text-align:right;top:605.0px;height:20px;line-height:20px;white-space:nowrap;font-size:11.5px;"><span style="display:inline-block;transform:scaleX(0.9600);transform-origin:right center;">150</span></div>
<div style="left:312px;width:400px;text-align:right;top:605.0px;height:20px;line-height:20px;white-space:nowrap;font-size:11.5px;"><span style="display:inline-block;transform:scaleX(0.9600);transform-origin:right center;">0</span></div>
<div style="left:648px;top:626px;width:689px;height:22px"><div class="cell" style="left:618px;top:0;width:71px;height:22px;background:#fff;border-left:1px solid #a0a0a0;border-right:1px solid #a0a0a0;"></div><div class="cell" style="left:548px;top:0;width:70px;height:22px;background:#fff;border-left:1px solid #a0a0a0;"></div><div class="cell" style="left:468px;top:0;width:80px;height:22px;background:#fff;border-left:1px solid #a0a0a0;"></div><div class="cell" style="left:412px;top:0;width:56px;height:22px;background:#fff;border-left:1px solid #a0a0a0;"></div><div class="cell" style="left:332px;top:0;width:80px;height:22px;background:#fff;border-left:1px solid #a0a0a0;"></div><div class="cell" style="left:254px;top:0;width:78px;height:22px;background:#fff;border-left:1px solid #a0a0a0;"></div><div class="cell" style="left:190px;top:0;width:64px;height:22px;background:#fff;border-left:1px solid #a0a0a0;"></div><div class="cell" style="left:109px;top:0;width:81px;height:22px;background:#c0ffc0;border-left:1px solid #a0a0a0;"></div><div class="cell" style="left:69px;top:0;width:40px;height:22px;background:#fff;border-left:1px solid #a0a0a0;"><div class="chk" style="left:13px;top:4px"></div></div><div class="cell" style="left:0px;top:0;width:69px;height:22px;background:#fff;border-left:1px solid #a0a0a0;"></div></div>
<div style="left:931px;width:400px;text-align:right;top:627.0px;height:20px;line-height:20px;white-space:nowrap;font-size:11.5px;"><span style="display:inline-block;transform:scaleX(0.9600);transform-origin:right center;">30/01/2026</span></div>
<div style="left:861px;width:400px;text-align:right;top:627.0px;height:20px;line-height:20px;white-space:nowrap;font-size:11.5px;"><span style="display:inline-block;transform:scaleX(0.9600);transform-origin:right center;">30/01/2026</span></div>
<div style="left:791px;width:400px;text-align:right;top:627.0px;height:20px;line-height:20px;white-space:nowrap;font-size:11.5px;"><span style="display:inline-block;transform:scaleX(0.9600);transform-origin:right center;">121515</span></div>
<div style="left:711px;width:400px;text-align:right;top:626.5px;height:20px;line-height:20px;white-space:nowrap;font-size:12px;"><span style="display:inline-block;transform:scaleX(0.9100);transform-origin:right center;direction:rtl;unicode-bidi:plaintext;">السحب</span></div>
<div style="left:655px;width:400px;text-align:right;top:626.5px;height:20px;line-height:20px;white-space:nowrap;font-size:12px;"><span style="display:inline-block;transform:scaleX(0.9100);transform-origin:right center;direction:rtl;unicode-bidi:plaintext;">محمد عبد العال</span></div>
<div style="left:575px;width:400px;text-align:right;top:626.5px;height:20px;line-height:20px;white-space:nowrap;font-size:12px;"><span style="display:inline-block;transform:scaleX(0.9100);transform-origin:right center;direction:rtl;unicode-bidi:plaintext;">حساب الفيزا</span></div>
<div style="left:497px;width:400px;text-align:right;top:627.0px;height:20px;line-height:20px;white-space:nowrap;font-size:11.5px;"><span style="display:inline-block;transform:scaleX(0.9600);transform-origin:right center;">6000</span></div>
<div style="left:312px;width:400px;text-align:right;top:627.0px;height:20px;line-height:20px;white-space:nowrap;font-size:11.5px;"><span style="display:inline-block;transform:scaleX(0.9600);transform-origin:right center;">0</span></div>
<div class="tb" style="left:1126px;top:721px;width:102px;height:25px;"></div>
<div class="tb" style="left:1126px;top:753px;width:102px;height:25px;"></div>
<div class="btn" style="left:1046px;top:720px;width:73px;height:59px;"></div>
<div class="tb" style="left:888px;top:721px;width:102px;height:25px;"></div>
<div class="tb" style="left:888px;top:753px;width:102px;height:25px;"></div>
<div class="btn" style="left:798px;top:722px;width:84px;height:57px;"></div>
<div class="tb" style="left:630px;top:721px;width:102px;height:25px;"></div>
<div class="tb" style="left:630px;top:753px;width:102px;height:25px;"></div>
<div style="left:923.4000000000001px;width:400px;text-align:right;top:723.0px;height:20px;line-height:20px;white-space:nowrap;font-size:13px;"><span style="display:inline-block;transform:scaleX(0.8382);transform-origin:right center;direction:rtl;unicode-bidi:plaintext;">اجمالى المديونية</span></div>
<div style="left:925.9000000000001px;width:400px;text-align:right;top:752.5px;height:20px;line-height:20px;white-space:nowrap;font-size:13px;"><span style="display:inline-block;transform:scaleX(0.8395);transform-origin:right center;direction:rtl;unicode-bidi:plaintext;">اجمالى المستحق</span></div>
<div style="left:977.1500000000001px;width:400px;text-align:center;top:723.0px;height:20px;line-height:20px;white-space:nowrap;font-size:12px;-webkit-text-stroke:0.4px #000;"><span style="display:inline-block;transform:scaleX(0.8599);transform-origin:center center;">50702</span></div>
<div style="left:978.0px;width:400px;text-align:center;top:755.0px;height:20px;line-height:20px;white-space:nowrap;font-size:12px;-webkit-text-stroke:0.4px #000;"><span style="display:inline-block;transform:scaleX(0.7490);transform-origin:center center;">1500</span></div>
<div style="left:881.3px;width:400px;text-align:center;top:731.4px;height:20px;line-height:20px;white-space:nowrap;font-size:13px;"><span style="display:inline-block;transform:scaleX(0.9167);transform-origin:center center;direction:rtl;unicode-bidi:plaintext;">صور</span></div>
<div style="left:881.6500000000001px;width:400px;text-align:center;top:747.1px;height:20px;line-height:20px;white-space:nowrap;font-size:13px;"><span style="display:inline-block;transform:scaleX(0.9000);transform-origin:center center;direction:rtl;unicode-bidi:plaintext;">المستند</span></div>
<div style="left:633.5999999999999px;width:400px;text-align:right;top:723.4px;height:20px;line-height:20px;white-space:nowrap;font-size:13px;"><span style="display:inline-block;transform:scaleX(0.8689);transform-origin:right center;direction:rtl;unicode-bidi:plaintext;">المحصل</span></div>
<div style="left:633.5999999999999px;width:400px;text-align:right;top:755.2px;height:20px;line-height:20px;white-space:nowrap;font-size:13px;"><span style="display:inline-block;transform:scaleX(0.8927);transform-origin:right center;direction:rtl;unicode-bidi:plaintext;">المسدد</span></div>
<div style="left:739.9px;width:400px;text-align:center;top:723.0px;height:20px;line-height:20px;white-space:nowrap;font-size:12px;-webkit-text-stroke:0.4px #000;"><span style="display:inline-block;transform:scaleX(0.7415);transform-origin:center center;">1050</span></div>
<div style="left:738.8499999999999px;width:400px;text-align:center;top:755.0px;height:20px;line-height:20px;white-space:nowrap;font-size:12px;-webkit-text-stroke:0.4px #000;"><span style="display:inline-block;transform:scaleX(0.8822);transform-origin:center center;">0</span></div>
<div style="left:638.5px;width:400px;text-align:center;top:740.4px;height:20px;line-height:20px;white-space:nowrap;font-size:13px;font-weight:bold;"><span style="display:inline-block;transform:scaleX(0.8355);transform-origin:center center;">Export</span></div>
<div style="left:369.5px;width:400px;text-align:right;top:723.2px;height:20px;line-height:20px;white-space:nowrap;font-size:13px;"><span style="display:inline-block;transform:scaleX(0.8606);transform-origin:right center;direction:rtl;unicode-bidi:plaintext;">الباقى</span></div>
<div style="left:369.5px;width:400px;text-align:right;top:754.9px;height:20px;line-height:20px;white-space:nowrap;font-size:13px;"><span style="display:inline-block;transform:scaleX(0.8606);transform-origin:right center;direction:rtl;unicode-bidi:plaintext;">الباقى</span></div>
<div style="left:481.4000000000001px;width:400px;text-align:center;top:722.2px;height:20px;line-height:20px;white-space:nowrap;font-size:12px;-webkit-text-stroke:0.4px #000;"><span style="display:inline-block;transform:scaleX(0.8509);transform-origin:center center;">49652</span></div>
<div style="left:481.4px;width:400px;text-align:center;top:754.3px;height:20px;line-height:20px;white-space:nowrap;font-size:12px;-webkit-text-stroke:0.4px #000;"><span style="display:inline-block;transform:scaleX(0.7490);transform-origin:center center;">1500</span></div>
</body></html>
